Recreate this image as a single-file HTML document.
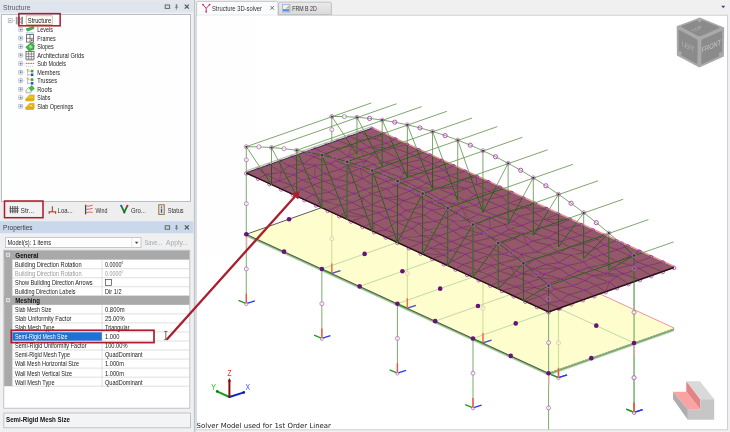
<!DOCTYPE html>
<html><head><meta charset="utf-8"><title>Structure 3D-solver</title>
<style>
html,body{margin:0;padding:0;background:#f0f0f0;overflow:hidden}
svg{display:block;font-family:"Liberation Sans",sans-serif;will-change:transform;opacity:0.999}
</style></head><body>
<svg width="730" height="432" viewBox="0 0 730 432">
<rect x="0.00" y="0.00" width="730.00" height="432.00" fill="#f0f0f0" />
<rect x="0.00" y="0.00" width="193.50" height="1.20" fill="#e4e6e9" />
<rect x="0.00" y="1.20" width="193.50" height="11.40" fill="#dfe5ee" />
<text x="3.10" y="9.82" font-size="7.7" fill="#5a5a5a" textLength="27.40" lengthAdjust="spacingAndGlyphs" >Structure</text>
<rect x="165.20" y="5.00" width="4.40" height="3.40" fill="none" stroke="#666" stroke-width="1.0" />
<line x1="176.50" y1="4.30" x2="176.50" y2="7.50" stroke="#777" stroke-width="1.5" />
<line x1="175.00" y1="7.60" x2="178.00" y2="7.60" stroke="#777" stroke-width="0.8" />
<line x1="176.50" y1="7.60" x2="176.50" y2="9.60" stroke="#777" stroke-width="0.7" />
<line x1="184.80" y1="4.60" x2="188.80" y2="8.60" stroke="#555" stroke-width="1.2" />
<line x1="188.80" y1="4.60" x2="184.80" y2="8.60" stroke="#555" stroke-width="1.2" />
<rect x="1.50" y="14.50" width="189.00" height="187.00" fill="#ffffff" stroke="#b9bec6" stroke-width="1" />
<line x1="10.00" y1="23.50" x2="10.00" y2="20.60" stroke="#bbb" stroke-width="0.6" />
<line x1="20.60" y1="24.00" x2="20.60" y2="106.00" stroke="#c8c8c8" stroke-width="0.6" stroke-dasharray="0.7 0.9"/>
<rect x="8.20" y="18.70" width="4.00" height="4.00" fill="#fff" stroke="#9aa7b8" stroke-width="0.6" />
<line x1="9.20" y1="20.70" x2="11.20" y2="20.70" stroke="#345" stroke-width="0.6" />
<line x1="12.40" y1="20.70" x2="15.00" y2="20.70" stroke="#c8c8c8" stroke-width="0.6" />
<rect x="15.80" y="16.80" width="1.80" height="7.60" fill="#9a9a9a" />
<rect x="21.20" y="16.80" width="1.80" height="7.60" fill="#8a8a8a" />
<rect x="17.70" y="18.60" width="3.30" height="0.80" fill="#666" />
<rect x="17.70" y="21.60" width="3.30" height="0.80" fill="#666" />
<rect x="18.60" y="16.50" width="1.40" height="8.00" fill="#999" />
<rect x="26.20" y="15.80" width="26.00" height="8.60" fill="#fffdf9" stroke="#c9a27a" stroke-width="0.7" />
<text x="27.80" y="23.24" font-size="7.6" fill="#111" textLength="23.40" lengthAdjust="spacingAndGlyphs" >Structure</text>
<rect x="18.80" y="27.70" width="3.80" height="3.80" fill="#fff" stroke="#9aa7b8" stroke-width="0.6" />
<line x1="19.60" y1="29.60" x2="21.80" y2="29.60" stroke="#2b4f9e" stroke-width="0.6" />
<line x1="20.70" y1="28.50" x2="20.70" y2="30.70" stroke="#2b4f9e" stroke-width="0.6" />
<line x1="22.80" y1="29.60" x2="24.50" y2="29.60" stroke="#c8c8c8" stroke-width="0.6" />
<text x="37.30" y="32.04" font-size="7.6" fill="#1a1a1a" textLength="15.70" lengthAdjust="spacingAndGlyphs" >Levels</text>
<polygon points="26.00,28.80 33.50,26.40 34.00,28.60 27.50,31.20" fill="#3fb34a" stroke="#2a8a33" stroke-width="0.5" />
<line x1="26.00" y1="32.90" x2="34.00" y2="32.90" stroke="#7fb0c8" stroke-width="0.7" />
<rect x="18.80" y="36.22" width="3.80" height="3.80" fill="#fff" stroke="#9aa7b8" stroke-width="0.6" />
<line x1="19.60" y1="38.12" x2="21.80" y2="38.12" stroke="#2b4f9e" stroke-width="0.6" />
<line x1="20.70" y1="37.02" x2="20.70" y2="39.22" stroke="#2b4f9e" stroke-width="0.6" />
<line x1="22.80" y1="38.12" x2="24.50" y2="38.12" stroke="#c8c8c8" stroke-width="0.6" />
<text x="37.30" y="40.56" font-size="7.6" fill="#1a1a1a" textLength="18.30" lengthAdjust="spacingAndGlyphs" >Frames</text>
<rect x="26.60" y="34.52" width="6.80" height="7.60" fill="#fff" stroke="#555" stroke-width="0.8" />
<line x1="30.00" y1="34.52" x2="30.00" y2="42.12" stroke="#555" stroke-width="0.7" />
<line x1="26.60" y1="38.32" x2="33.40" y2="38.32" stroke="#555" stroke-width="0.7" />
<rect x="31.00" y="39.32" width="1.60" height="1.60" fill="#555" />
<rect x="18.80" y="44.74" width="3.80" height="3.80" fill="#fff" stroke="#9aa7b8" stroke-width="0.6" />
<line x1="19.60" y1="46.64" x2="21.80" y2="46.64" stroke="#2b4f9e" stroke-width="0.6" />
<line x1="20.70" y1="45.54" x2="20.70" y2="47.74" stroke="#2b4f9e" stroke-width="0.6" />
<line x1="22.80" y1="46.64" x2="24.50" y2="46.64" stroke="#c8c8c8" stroke-width="0.6" />
<text x="37.30" y="49.08" font-size="7.6" fill="#1a1a1a" textLength="16.50" lengthAdjust="spacingAndGlyphs" >Slopes</text>
<polygon points="25.80,47.14 31.00,42.84 34.20,45.14 33.80,49.44 29.00,50.64" fill="#3fb34a" stroke="#2a7a33" stroke-width="0.6" />
<polygon points="28.50,46.14 31.00,44.64 32.80,47.44 30.20,48.84" fill="#9be08a" />
<line x1="31.50" y1="42.64" x2="34.50" y2="43.44" stroke="#666" stroke-width="0.8" />
<rect x="18.80" y="53.26" width="3.80" height="3.80" fill="#fff" stroke="#9aa7b8" stroke-width="0.6" />
<line x1="19.60" y1="55.16" x2="21.80" y2="55.16" stroke="#2b4f9e" stroke-width="0.6" />
<line x1="20.70" y1="54.06" x2="20.70" y2="56.26" stroke="#2b4f9e" stroke-width="0.6" />
<line x1="22.80" y1="55.16" x2="24.50" y2="55.16" stroke="#c8c8c8" stroke-width="0.6" />
<text x="37.30" y="57.60" font-size="7.6" fill="#1a1a1a" textLength="46.70" lengthAdjust="spacingAndGlyphs" >Architectural Grids</text>
<rect x="26.00" y="51.36" width="8.00" height="7.80" fill="#fff" stroke="#555" stroke-width="0.8" />
<line x1="28.67" y1="51.36" x2="28.67" y2="59.16" stroke="#555" stroke-width="0.6" />
<line x1="26.00" y1="53.96" x2="34.00" y2="53.96" stroke="#555" stroke-width="0.6" />
<line x1="31.34" y1="51.36" x2="31.34" y2="59.16" stroke="#555" stroke-width="0.6" />
<line x1="26.00" y1="56.56" x2="34.00" y2="56.56" stroke="#555" stroke-width="0.6" />
<rect x="18.80" y="61.78" width="3.80" height="3.80" fill="#fff" stroke="#9aa7b8" stroke-width="0.6" />
<line x1="19.60" y1="63.68" x2="21.80" y2="63.68" stroke="#2b4f9e" stroke-width="0.6" />
<line x1="20.70" y1="62.58" x2="20.70" y2="64.78" stroke="#2b4f9e" stroke-width="0.6" />
<line x1="22.80" y1="63.68" x2="24.50" y2="63.68" stroke="#c8c8c8" stroke-width="0.6" />
<text x="37.30" y="66.12" font-size="7.6" fill="#1a1a1a" textLength="28.70" lengthAdjust="spacingAndGlyphs" >Sub Models</text>
<line x1="25.80" y1="63.38" x2="34.20" y2="63.38" stroke="#d8452a" stroke-width="0.9" stroke-dasharray="1.6 0.7"/>
<line x1="25.80" y1="60.48" x2="34.20" y2="60.48" stroke="#999" stroke-width="0.5" />
<line x1="25.80" y1="66.28" x2="34.20" y2="66.28" stroke="#999" stroke-width="0.5" stroke-dasharray="1.2 0.8"/>
<rect x="18.80" y="70.30" width="3.80" height="3.80" fill="#fff" stroke="#9aa7b8" stroke-width="0.6" />
<line x1="19.60" y1="72.20" x2="21.80" y2="72.20" stroke="#2b4f9e" stroke-width="0.6" />
<line x1="20.70" y1="71.10" x2="20.70" y2="73.30" stroke="#2b4f9e" stroke-width="0.6" />
<line x1="22.80" y1="72.20" x2="24.50" y2="72.20" stroke="#c8c8c8" stroke-width="0.6" />
<text x="37.30" y="74.64" font-size="7.6" fill="#1a1a1a" textLength="22.70" lengthAdjust="spacingAndGlyphs" >Members</text>
<rect x="26.80" y="69.00" width="1.70" height="1.70" fill="#e8a23a" />
<line x1="27.60" y1="70.70" x2="27.60" y2="75.70" stroke="#999" stroke-width="0.6" />
<line x1="27.60" y1="71.20" x2="30.80" y2="71.20" stroke="#999" stroke-width="0.6" />
<line x1="27.60" y1="74.80" x2="30.80" y2="74.80" stroke="#999" stroke-width="0.6" />
<rect x="30.80" y="69.80" width="2.60" height="2.60" fill="#3aa43a" />
<rect x="30.80" y="73.50" width="2.60" height="2.60" fill="#2456c8" />
<rect x="18.80" y="78.82" width="3.80" height="3.80" fill="#fff" stroke="#9aa7b8" stroke-width="0.6" />
<line x1="19.60" y1="80.72" x2="21.80" y2="80.72" stroke="#2b4f9e" stroke-width="0.6" />
<line x1="20.70" y1="79.62" x2="20.70" y2="81.82" stroke="#2b4f9e" stroke-width="0.6" />
<line x1="22.80" y1="80.72" x2="24.50" y2="80.72" stroke="#c8c8c8" stroke-width="0.6" />
<text x="37.30" y="83.16" font-size="7.6" fill="#1a1a1a" textLength="19.70" lengthAdjust="spacingAndGlyphs" >Trusses</text>
<rect x="26.80" y="77.52" width="1.70" height="1.70" fill="#e8a23a" />
<line x1="27.60" y1="79.22" x2="27.60" y2="84.22" stroke="#999" stroke-width="0.6" />
<line x1="27.60" y1="79.72" x2="30.80" y2="79.72" stroke="#999" stroke-width="0.6" />
<line x1="27.60" y1="83.32" x2="30.80" y2="83.32" stroke="#999" stroke-width="0.6" />
<rect x="30.80" y="78.32" width="2.60" height="2.60" fill="#3aa43a" />
<rect x="30.80" y="82.02" width="2.60" height="2.60" fill="#2456c8" />
<rect x="18.80" y="87.34" width="3.80" height="3.80" fill="#fff" stroke="#9aa7b8" stroke-width="0.6" />
<line x1="19.60" y1="89.24" x2="21.80" y2="89.24" stroke="#2b4f9e" stroke-width="0.6" />
<line x1="20.70" y1="88.14" x2="20.70" y2="90.34" stroke="#2b4f9e" stroke-width="0.6" />
<line x1="22.80" y1="89.24" x2="24.50" y2="89.24" stroke="#c8c8c8" stroke-width="0.6" />
<text x="37.30" y="91.68" font-size="7.6" fill="#1a1a1a" textLength="14.70" lengthAdjust="spacingAndGlyphs" >Roofs</text>
<polygon points="26.00,90.04 29.00,87.24 31.00,89.74 31.00,92.84 26.00,92.84" fill="#f4f4f4" stroke="#888" stroke-width="0.6" />
<polygon points="29.20,88.04 31.80,85.44 34.40,88.44 31.60,91.04" fill="#45c03a" stroke="#2a8a2a" stroke-width="0.5" />
<rect x="18.80" y="95.86" width="3.80" height="3.80" fill="#fff" stroke="#9aa7b8" stroke-width="0.6" />
<line x1="19.60" y1="97.76" x2="21.80" y2="97.76" stroke="#2b4f9e" stroke-width="0.6" />
<line x1="20.70" y1="96.66" x2="20.70" y2="98.86" stroke="#2b4f9e" stroke-width="0.6" />
<line x1="22.80" y1="97.76" x2="24.50" y2="97.76" stroke="#c8c8c8" stroke-width="0.6" />
<text x="37.30" y="100.20" font-size="7.6" fill="#1a1a1a" textLength="13.00" lengthAdjust="spacingAndGlyphs" >Slabs</text>
<polygon points="25.80,98.96 29.50,94.96 34.20,94.96 34.20,99.26 33.40,100.96 25.80,100.96" fill="#f2c21a" stroke="#b88a10" stroke-width="0.5" />
<line x1="25.80" y1="99.16" x2="33.60" y2="99.16" stroke="#a87a10" stroke-width="0.5" />
<rect x="18.80" y="104.38" width="3.80" height="3.80" fill="#fff" stroke="#9aa7b8" stroke-width="0.6" />
<line x1="19.60" y1="106.28" x2="21.80" y2="106.28" stroke="#2b4f9e" stroke-width="0.6" />
<line x1="20.70" y1="105.18" x2="20.70" y2="107.38" stroke="#2b4f9e" stroke-width="0.6" />
<line x1="22.80" y1="106.28" x2="24.50" y2="106.28" stroke="#c8c8c8" stroke-width="0.6" />
<text x="37.30" y="108.72" font-size="7.6" fill="#1a1a1a" textLength="36.00" lengthAdjust="spacingAndGlyphs" >Slab Openings</text>
<polygon points="25.80,107.48 29.50,103.48 34.20,103.48 34.20,107.78 33.40,109.48 25.80,109.48" fill="#f2c21a" stroke="#b88a10" stroke-width="0.5" />
<polygon points="29.00,106.68 30.40,104.88 32.80,104.88 31.80,106.68" fill="#fff7d0" stroke="#a87a10" stroke-width="0.4" />
<line x1="25.80" y1="107.88" x2="33.60" y2="107.88" stroke="#a87a10" stroke-width="0.5" />
<rect x="0.00" y="202.20" width="193.50" height="19.40" fill="#eeeeee" />
<rect x="4.60" y="202.00" width="38.40" height="15.40" fill="#f3f3f3" stroke="#d0d0d0" stroke-width="0.6" />
<rect x="9.80" y="206.00" width="1.30" height="7.20" fill="#6a6a6a" />
<rect x="12.10" y="206.00" width="1.30" height="7.20" fill="#6a6a6a" />
<rect x="14.40" y="206.00" width="1.30" height="7.20" fill="#6a6a6a" />
<rect x="16.70" y="206.00" width="1.30" height="7.20" fill="#6a6a6a" />
<rect x="9.60" y="208.00" width="9.20" height="0.80" fill="#555" />
<rect x="9.60" y="210.60" width="9.20" height="0.80" fill="#555" />
<text x="20.60" y="212.56" font-size="7.4" fill="#333" textLength="13.60" lengthAdjust="spacingAndGlyphs" >Str...</text>
<line x1="52.40" y1="206.20" x2="52.40" y2="211.40" stroke="#b5503c" stroke-width="1.2" />
<line x1="48.60" y1="211.80" x2="56.20" y2="211.80" stroke="#b5503c" stroke-width="1.3" />
<line x1="49.20" y1="211.80" x2="49.20" y2="214.00" stroke="#b5503c" stroke-width="1.1" />
<line x1="55.60" y1="211.80" x2="55.60" y2="214.00" stroke="#b5503c" stroke-width="1.1" />
<text x="57.60" y="212.56" font-size="7.4" fill="#333" textLength="15.00" lengthAdjust="spacingAndGlyphs" >Loa...</text>
<line x1="85.60" y1="204.80" x2="85.60" y2="214.40" stroke="#4a4a4a" stroke-width="1.3" />
<path d="M86.4,206 Q89,206.6 92.6,205.2 M86.4,209.4 Q89.5,209.2 92.6,208.4 M86.4,212.6 Q89.5,211.6 92.6,212.4" fill="none" stroke="#cc5a4a" stroke-width="0.9"/>
<text x="95.40" y="212.56" font-size="7.4" fill="#333" textLength="12.00" lengthAdjust="spacingAndGlyphs" >Wind</text>
<line x1="121.40" y1="206.20" x2="124.30" y2="212.20" stroke="#1f7a30" stroke-width="1.8" />
<line x1="127.20" y1="206.20" x2="124.30" y2="212.20" stroke="#1f7a30" stroke-width="1.8" />
<circle cx="121.20" cy="205.80" r="1.1" fill="#2456c8" />
<circle cx="127.40" cy="205.80" r="1.1" fill="#d0282a" />
<circle cx="124.30" cy="212.60" r="1.0" fill="#145a22" />
<text x="131.00" y="212.56" font-size="7.4" fill="#333" textLength="14.80" lengthAdjust="spacingAndGlyphs" >Gro...</text>
<rect x="158.80" y="204.80" width="5.40" height="9.60" fill="#f4ecd8" stroke="#8f6f3c" stroke-width="1.0" />
<rect x="160.80" y="206.40" width="1.40" height="1.40" fill="#2b5fb8" />
<rect x="160.80" y="208.60" width="1.40" height="4.20" fill="#2b5fb8" />
<text x="167.80" y="212.56" font-size="7.4" fill="#333" textLength="15.80" lengthAdjust="spacingAndGlyphs" >Status</text>
<rect x="0.00" y="221.30" width="193.50" height="11.90" fill="#c9d8ea" />
<text x="3.10" y="230.17" font-size="7.7" fill="#3c3c3c" textLength="29.40" lengthAdjust="spacingAndGlyphs" >Properties</text>
<rect x="165.20" y="225.80" width="4.40" height="3.40" fill="none" stroke="#666" stroke-width="1.0" />
<line x1="176.50" y1="225.00" x2="176.50" y2="228.20" stroke="#777" stroke-width="1.5" />
<line x1="175.00" y1="228.30" x2="178.00" y2="228.30" stroke="#777" stroke-width="0.8" />
<line x1="176.50" y1="228.30" x2="176.50" y2="230.30" stroke="#777" stroke-width="0.7" />
<line x1="184.80" y1="225.40" x2="188.80" y2="229.40" stroke="#555" stroke-width="1.2" />
<line x1="188.80" y1="225.40" x2="184.80" y2="229.40" stroke="#555" stroke-width="1.2" />
<rect x="0.00" y="233.80" width="193.50" height="198.20" fill="#f0f0f0" />
<rect x="5.50" y="237.60" width="135.50" height="10.00" fill="#ffffff" stroke="#b8bcc4" stroke-width="0.8" />
<text x="7.60" y="245.43" font-size="7.3" fill="#222" textLength="43.40" lengthAdjust="spacingAndGlyphs" >Model(s): 1 items</text>
<line x1="131.80" y1="237.60" x2="131.80" y2="247.60" stroke="#d0d3d8" stroke-width="0.6" />
<polygon points="134.80,241.80 138.40,241.80 136.60,244.00" fill="#444" />
<text x="144.60" y="245.34" font-size="7.6" fill="#a3a8b0" textLength="17.40" lengthAdjust="spacingAndGlyphs" >Save...</text>
<text x="166.00" y="245.34" font-size="7.6" fill="#a3a8b0" textLength="22.00" lengthAdjust="spacingAndGlyphs" >Apply...</text>
<rect x="3.80" y="250.20" width="186.00" height="158.00" fill="#ffffff" stroke="#b5b8bd" stroke-width="0.8" />
<rect x="4.20" y="250.60" width="8.20" height="135.60" fill="#a9a9a9" />
<rect x="4.20" y="250.60" width="185.20" height="9.04" fill="#a9a9a9" />
<rect x="6.20" y="253.12" width="3.60" height="3.60" fill="#dcdce4" stroke="#ececf2" stroke-width="0.5" />
<line x1="7.00" y1="254.92" x2="9.00" y2="254.92" stroke="#4a5a8a" stroke-width="0.6" />
<text x="15.30" y="258.13" font-size="7.8" fill="#111" textLength="23.20" lengthAdjust="spacingAndGlyphs" font-weight="bold" >General</text>
<line x1="12.40" y1="268.68" x2="189.40" y2="268.68" stroke="#d2d2d2" stroke-width="0.7" />
<line x1="102.00" y1="259.64" x2="102.00" y2="268.68" stroke="#d2d2d2" stroke-width="0.7" />
<text x="15.00" y="267.02" font-size="7.4" fill="#222" textLength="66.60" lengthAdjust="spacingAndGlyphs" >Building Direction Rotation</text>
<text x="105.00" y="267.02" font-size="7.4" fill="#222" textLength="18.50" lengthAdjust="spacingAndGlyphs" >0.0000°</text>
<line x1="12.40" y1="277.72" x2="189.40" y2="277.72" stroke="#d2d2d2" stroke-width="0.7" />
<line x1="102.00" y1="268.68" x2="102.00" y2="277.72" stroke="#d2d2d2" stroke-width="0.7" />
<text x="15.00" y="276.06" font-size="7.4" fill="#9a9a9a" textLength="66.60" lengthAdjust="spacingAndGlyphs" >Building Direction Rotation</text>
<text x="105.00" y="276.06" font-size="7.4" fill="#9a9a9a" textLength="18.50" lengthAdjust="spacingAndGlyphs" >0.0000°</text>
<line x1="12.40" y1="286.76" x2="189.40" y2="286.76" stroke="#d2d2d2" stroke-width="0.7" />
<line x1="102.00" y1="277.72" x2="102.00" y2="286.76" stroke="#d2d2d2" stroke-width="0.7" />
<text x="15.00" y="285.10" font-size="7.4" fill="#222" textLength="77.50" lengthAdjust="spacingAndGlyphs" >Show Building Direction Arrows</text>
<rect x="105.60" y="279.54" width="5.80" height="5.80" fill="#fff" stroke="#444" stroke-width="0.7" />
<line x1="12.40" y1="295.80" x2="189.40" y2="295.80" stroke="#d2d2d2" stroke-width="0.7" />
<line x1="102.00" y1="286.76" x2="102.00" y2="295.80" stroke="#d2d2d2" stroke-width="0.7" />
<text x="15.00" y="294.14" font-size="7.4" fill="#222" textLength="60.50" lengthAdjust="spacingAndGlyphs" >Building Direction Labels</text>
<text x="105.00" y="294.14" font-size="7.4" fill="#222" textLength="16.50" lengthAdjust="spacingAndGlyphs" >Dir 1/2</text>
<rect x="4.20" y="295.80" width="185.20" height="9.04" fill="#a9a9a9" />
<rect x="6.20" y="298.32" width="3.60" height="3.60" fill="#dcdce4" stroke="#ececf2" stroke-width="0.5" />
<line x1="7.00" y1="300.12" x2="9.00" y2="300.12" stroke="#4a5a8a" stroke-width="0.6" />
<text x="15.30" y="303.33" font-size="7.8" fill="#111" textLength="24.70" lengthAdjust="spacingAndGlyphs" font-weight="bold" >Meshing</text>
<line x1="12.40" y1="313.88" x2="189.40" y2="313.88" stroke="#d2d2d2" stroke-width="0.7" />
<line x1="102.00" y1="304.84" x2="102.00" y2="313.88" stroke="#d2d2d2" stroke-width="0.7" />
<text x="15.00" y="312.22" font-size="7.4" fill="#222" textLength="36.50" lengthAdjust="spacingAndGlyphs" >Slab Mesh Size</text>
<text x="105.00" y="312.22" font-size="7.4" fill="#222" textLength="19.50" lengthAdjust="spacingAndGlyphs" >0.800m</text>
<line x1="12.40" y1="322.92" x2="189.40" y2="322.92" stroke="#d2d2d2" stroke-width="0.7" />
<line x1="102.00" y1="313.88" x2="102.00" y2="322.92" stroke="#d2d2d2" stroke-width="0.7" />
<text x="15.00" y="321.26" font-size="7.4" fill="#222" textLength="56.50" lengthAdjust="spacingAndGlyphs" >Slab Uniformity Factor</text>
<text x="105.00" y="321.26" font-size="7.4" fill="#222" textLength="19.50" lengthAdjust="spacingAndGlyphs" >25.00%</text>
<line x1="12.40" y1="331.96" x2="189.40" y2="331.96" stroke="#d2d2d2" stroke-width="0.7" />
<line x1="102.00" y1="322.92" x2="102.00" y2="331.96" stroke="#d2d2d2" stroke-width="0.7" />
<text x="15.00" y="330.30" font-size="7.4" fill="#222" textLength="39.50" lengthAdjust="spacingAndGlyphs" >Slab Mesh Type</text>
<text x="105.00" y="330.30" font-size="7.4" fill="#222" textLength="24.50" lengthAdjust="spacingAndGlyphs" >Triangular</text>
<line x1="12.40" y1="341.00" x2="189.40" y2="341.00" stroke="#d2d2d2" stroke-width="0.7" />
<line x1="102.00" y1="331.96" x2="102.00" y2="341.00" stroke="#d2d2d2" stroke-width="0.7" />
<rect x="12.40" y="332.26" width="89.40" height="8.44" fill="#1e72d6" />
<text x="15.00" y="339.34" font-size="7.4" fill="#ffffff" textLength="52.50" lengthAdjust="spacingAndGlyphs" >Semi-Rigid Mesh Size</text>
<text x="105.00" y="339.34" font-size="7.4" fill="#222" textLength="14.50" lengthAdjust="spacingAndGlyphs" >1.000</text>
<line x1="12.40" y1="350.04" x2="189.40" y2="350.04" stroke="#d2d2d2" stroke-width="0.7" />
<line x1="102.00" y1="341.00" x2="102.00" y2="350.04" stroke="#d2d2d2" stroke-width="0.7" />
<text x="15.00" y="348.38" font-size="7.4" fill="#222" textLength="71.50" lengthAdjust="spacingAndGlyphs" >Semi-Rigid Uniformity Factor</text>
<text x="105.00" y="348.38" font-size="7.4" fill="#222" textLength="22.50" lengthAdjust="spacingAndGlyphs" >100.00%</text>
<line x1="12.40" y1="359.08" x2="189.40" y2="359.08" stroke="#d2d2d2" stroke-width="0.7" />
<line x1="102.00" y1="350.04" x2="102.00" y2="359.08" stroke="#d2d2d2" stroke-width="0.7" />
<text x="15.00" y="357.42" font-size="7.4" fill="#222" textLength="55.00" lengthAdjust="spacingAndGlyphs" >Semi-Rigid Mesh Type</text>
<text x="105.00" y="357.42" font-size="7.4" fill="#222" textLength="37.50" lengthAdjust="spacingAndGlyphs" >QuadDominant</text>
<line x1="12.40" y1="368.12" x2="189.40" y2="368.12" stroke="#d2d2d2" stroke-width="0.7" />
<line x1="102.00" y1="359.08" x2="102.00" y2="368.12" stroke="#d2d2d2" stroke-width="0.7" />
<text x="15.00" y="366.46" font-size="7.4" fill="#222" textLength="64.00" lengthAdjust="spacingAndGlyphs" >Wall Mesh Horizontal Size</text>
<text x="105.00" y="366.46" font-size="7.4" fill="#222" textLength="19.00" lengthAdjust="spacingAndGlyphs" >1.000m</text>
<line x1="12.40" y1="377.16" x2="189.40" y2="377.16" stroke="#d2d2d2" stroke-width="0.7" />
<line x1="102.00" y1="368.12" x2="102.00" y2="377.16" stroke="#d2d2d2" stroke-width="0.7" />
<text x="15.00" y="375.50" font-size="7.4" fill="#222" textLength="57.00" lengthAdjust="spacingAndGlyphs" >Wall Mesh Vertical Size</text>
<text x="105.00" y="375.50" font-size="7.4" fill="#222" textLength="19.00" lengthAdjust="spacingAndGlyphs" >1.000m</text>
<line x1="12.40" y1="386.20" x2="189.40" y2="386.20" stroke="#d2d2d2" stroke-width="0.7" />
<line x1="102.00" y1="377.16" x2="102.00" y2="386.20" stroke="#d2d2d2" stroke-width="0.7" />
<text x="15.00" y="384.54" font-size="7.4" fill="#222" textLength="39.50" lengthAdjust="spacingAndGlyphs" >Wall Mesh Type</text>
<text x="105.00" y="384.54" font-size="7.4" fill="#222" textLength="37.50" lengthAdjust="spacingAndGlyphs" >QuadDominant</text>
<rect x="3.80" y="413.00" width="186.60" height="14.80" fill="#f3f4f6" stroke="#b5b8bd" stroke-width="0.8" />
<text x="6.00" y="422.11" font-size="7.8" fill="#111" textLength="64.00" lengthAdjust="spacingAndGlyphs" font-weight="bold" >Semi-Rigid Mesh Size</text>
<rect x="193.50" y="0.00" width="2.20" height="432.00" fill="#dfe2e7" />
<line x1="194.60" y1="0.00" x2="194.60" y2="432.00" stroke="#bcc0c8" stroke-width="1.0" />
<rect x="195.70" y="0.00" width="534.30" height="15.00" fill="#f0f0f0" />
<rect x="196.20" y="15.20" width="531.30" height="414.60" fill="#ffffff" stroke="#c3c7ce" stroke-width="0.8" />
<defs><clipPath id="vclip"><rect x="196.6" y="15.6" width="530.5" height="413.8"/></clipPath></defs>
<g clip-path="url(#vclip)">
<line x1="331.80" y1="204.05" x2="331.80" y2="273.35" stroke="#86b27a" stroke-width="1.1" />
<line x1="332.10" y1="205.55" x2="332.10" y2="216.05" stroke="#f6a4a4" stroke-width="1.3" stroke-opacity="0.85"/>
<line x1="331.80" y1="142.75" x2="331.80" y2="204.05" stroke="#86b27a" stroke-width="1.1" />
<circle cx="331.80" cy="173.40" r="2.0" fill="#ffffff" stroke="#b565b5" stroke-width="0.75" fill-opacity="0.7"/>
<line x1="331.80" y1="273.35" x2="324.00" y2="270.15" stroke="#1f9a1f" stroke-width="1.3" />
<line x1="331.80" y1="273.35" x2="340.40" y2="270.55" stroke="#2838e8" stroke-width="1.3" />
<line x1="331.80" y1="273.85" x2="331.80" y2="263.55" stroke="#ff4a2a" stroke-width="1.3" />
<circle cx="331.80" cy="238.70" r="2.0" fill="#ffffff" stroke="#b565b5" stroke-width="0.75" fill-opacity="0.7"/>
<circle cx="331.80" cy="273.95" r="1.5" fill="#ffffff" stroke="#b565b5" stroke-width="0.75" fill-opacity="0.7"/>
<line x1="407.36" y1="238.79" x2="407.36" y2="308.09" stroke="#86b27a" stroke-width="1.1" />
<line x1="407.36" y1="308.09" x2="399.56" y2="304.89" stroke="#1f9a1f" stroke-width="1.3" />
<line x1="407.36" y1="308.09" x2="415.96" y2="305.29" stroke="#2838e8" stroke-width="1.3" />
<line x1="407.36" y1="308.59" x2="407.36" y2="298.29" stroke="#ff4a2a" stroke-width="1.3" />
<circle cx="407.36" cy="273.44" r="2.0" fill="#ffffff" stroke="#b565b5" stroke-width="0.75" fill-opacity="0.7"/>
<circle cx="407.36" cy="308.69" r="1.5" fill="#ffffff" stroke="#b565b5" stroke-width="0.75" fill-opacity="0.7"/>
<line x1="482.93" y1="273.53" x2="482.93" y2="342.83" stroke="#86b27a" stroke-width="1.1" />
<line x1="482.93" y1="342.83" x2="475.13" y2="339.63" stroke="#1f9a1f" stroke-width="1.3" />
<line x1="482.93" y1="342.83" x2="491.53" y2="340.03" stroke="#2838e8" stroke-width="1.3" />
<line x1="482.93" y1="343.33" x2="482.93" y2="333.03" stroke="#ff4a2a" stroke-width="1.3" />
<circle cx="482.93" cy="308.18" r="2.0" fill="#ffffff" stroke="#b565b5" stroke-width="0.75" fill-opacity="0.7"/>
<circle cx="482.93" cy="343.43" r="1.5" fill="#ffffff" stroke="#b565b5" stroke-width="0.75" fill-opacity="0.7"/>
<line x1="558.49" y1="308.27" x2="558.49" y2="377.57" stroke="#86b27a" stroke-width="1.1" />
<line x1="558.49" y1="377.57" x2="550.69" y2="374.37" stroke="#1f9a1f" stroke-width="1.3" />
<line x1="558.49" y1="377.57" x2="567.09" y2="374.77" stroke="#2838e8" stroke-width="1.3" />
<line x1="558.49" y1="378.07" x2="558.49" y2="367.77" stroke="#ff4a2a" stroke-width="1.3" />
<circle cx="558.49" cy="342.92" r="2.0" fill="#ffffff" stroke="#b565b5" stroke-width="0.75" fill-opacity="0.7"/>
<circle cx="558.49" cy="378.17" r="1.5" fill="#ffffff" stroke="#b565b5" stroke-width="0.75" fill-opacity="0.7"/>
<line x1="634.06" y1="343.01" x2="634.06" y2="412.31" stroke="#86b27a" stroke-width="1.1" />
<line x1="634.36" y1="344.51" x2="634.36" y2="355.01" stroke="#f6a4a4" stroke-width="1.3" stroke-opacity="0.85"/>
<line x1="634.06" y1="281.71" x2="634.06" y2="343.01" stroke="#86b27a" stroke-width="1.1" />
<circle cx="634.06" cy="312.36" r="2.0" fill="#ffffff" stroke="#b565b5" stroke-width="0.75" fill-opacity="0.7"/>
<line x1="634.06" y1="412.31" x2="626.26" y2="409.11" stroke="#1f9a1f" stroke-width="1.3" />
<line x1="634.06" y1="412.31" x2="642.66" y2="409.51" stroke="#2838e8" stroke-width="1.3" />
<line x1="634.06" y1="412.81" x2="634.06" y2="402.51" stroke="#ff4a2a" stroke-width="1.3" />
<circle cx="634.06" cy="377.66" r="2.0" fill="#ffffff" stroke="#b565b5" stroke-width="0.75" fill-opacity="0.7"/>
<circle cx="634.06" cy="412.91" r="1.5" fill="#ffffff" stroke="#b565b5" stroke-width="0.75" fill-opacity="0.7"/>
<polygon points="246.30,234.30 371.81,189.89 674.07,328.85 548.56,373.26" fill="#fcfcae" stroke="none" stroke-width="1" fill-opacity="0.62"/>
<polyline points="371.81,189.09 674.07,328.05" fill="none" stroke="#f29090" stroke-width="1.0" />
<polygon points="246.30,234.30 548.56,373.26 674.07,328.85 674.07,331.35 548.56,375.76 246.30,236.80" fill="#b4d6aa" />
<polygon points="246.30,234.30 548.56,373.26 674.07,328.85 674.07,330.25 548.56,374.66 246.30,235.70" fill="#7aaa72" />
<polyline points="371.81,189.89 246.30,234.30 548.56,373.26 674.07,328.85" fill="none" stroke="#4a4a44" stroke-width="0.9" />
<polyline points="321.86,269.04 407.36,238.79" fill="none" stroke="#b3d19e" stroke-width="0.8" />
<polyline points="359.65,286.41 445.15,256.16" fill="none" stroke="#b3d19e" stroke-width="0.8" />
<polyline points="397.43,303.78 482.93,273.53" fill="none" stroke="#b3d19e" stroke-width="0.8" />
<polyline points="435.21,321.15 520.71,290.90" fill="none" stroke="#b3d19e" stroke-width="0.8" />
<polyline points="472.99,338.52 558.49,308.27" fill="none" stroke="#b3d19e" stroke-width="0.8" />
<polyline points="548.56,373.26 674.07,328.85" fill="none" stroke="#b3d19e" stroke-width="0.8" />
<polyline points="331.80,204.05 634.06,343.01" fill="none" stroke="#b3d19e" stroke-width="0.8" />
<g opacity="0.75">
<line x1="331.80" y1="273.35" x2="324.00" y2="270.15" stroke="#1f9a1f" stroke-width="1.3" />
<line x1="331.80" y1="273.35" x2="340.40" y2="270.55" stroke="#2838e8" stroke-width="1.3" />
<line x1="331.80" y1="273.85" x2="331.80" y2="263.55" stroke="#ff4a2a" stroke-width="1.3" />
</g>
<g opacity="0.75">
<line x1="407.36" y1="308.09" x2="399.56" y2="304.89" stroke="#1f9a1f" stroke-width="1.3" />
<line x1="407.36" y1="308.09" x2="415.96" y2="305.29" stroke="#2838e8" stroke-width="1.3" />
<line x1="407.36" y1="308.59" x2="407.36" y2="298.29" stroke="#ff4a2a" stroke-width="1.3" />
</g>
<g opacity="0.75">
<line x1="482.93" y1="342.83" x2="475.13" y2="339.63" stroke="#1f9a1f" stroke-width="1.3" />
<line x1="482.93" y1="342.83" x2="491.53" y2="340.03" stroke="#2838e8" stroke-width="1.3" />
<line x1="482.93" y1="343.33" x2="482.93" y2="333.03" stroke="#ff4a2a" stroke-width="1.3" />
</g>
<g opacity="0.75">
<line x1="558.49" y1="377.57" x2="550.69" y2="374.37" stroke="#1f9a1f" stroke-width="1.3" />
<line x1="558.49" y1="377.57" x2="567.09" y2="374.77" stroke="#2838e8" stroke-width="1.3" />
<line x1="558.49" y1="378.07" x2="558.49" y2="367.77" stroke="#ff4a2a" stroke-width="1.3" />
</g>
<line x1="246.30" y1="234.30" x2="246.30" y2="303.60" stroke="#86b27a" stroke-width="1.1" />
<line x1="246.60" y1="235.80" x2="246.60" y2="246.30" stroke="#f6a4a4" stroke-width="1.3" stroke-opacity="0.85"/>
<line x1="246.30" y1="173.00" x2="246.30" y2="234.30" stroke="#86b27a" stroke-width="1.1" />
<circle cx="246.30" cy="203.65" r="2.0" fill="#ffffff" stroke="#b565b5" stroke-width="0.75" fill-opacity="0.7"/>
<line x1="246.30" y1="303.60" x2="238.50" y2="300.40" stroke="#1f9a1f" stroke-width="1.3" />
<line x1="246.30" y1="303.60" x2="254.90" y2="300.80" stroke="#2838e8" stroke-width="1.3" />
<line x1="246.30" y1="304.10" x2="246.30" y2="293.80" stroke="#ff4a2a" stroke-width="1.3" />
<circle cx="246.30" cy="268.95" r="2.0" fill="#ffffff" stroke="#b565b5" stroke-width="0.75" fill-opacity="0.7"/>
<circle cx="246.30" cy="304.20" r="1.5" fill="#ffffff" stroke="#b565b5" stroke-width="0.75" fill-opacity="0.7"/>
<line x1="321.86" y1="269.04" x2="321.86" y2="338.34" stroke="#86b27a" stroke-width="1.1" />
<line x1="321.86" y1="338.34" x2="314.06" y2="335.14" stroke="#1f9a1f" stroke-width="1.3" />
<line x1="321.86" y1="338.34" x2="330.46" y2="335.54" stroke="#2838e8" stroke-width="1.3" />
<line x1="321.86" y1="338.84" x2="321.86" y2="328.54" stroke="#ff4a2a" stroke-width="1.3" />
<circle cx="321.86" cy="303.69" r="2.0" fill="#ffffff" stroke="#b565b5" stroke-width="0.75" fill-opacity="0.7"/>
<circle cx="321.86" cy="338.94" r="1.5" fill="#ffffff" stroke="#b565b5" stroke-width="0.75" fill-opacity="0.7"/>
<line x1="397.43" y1="303.78" x2="397.43" y2="373.08" stroke="#86b27a" stroke-width="1.1" />
<line x1="397.43" y1="373.08" x2="389.63" y2="369.88" stroke="#1f9a1f" stroke-width="1.3" />
<line x1="397.43" y1="373.08" x2="406.03" y2="370.28" stroke="#2838e8" stroke-width="1.3" />
<line x1="397.43" y1="373.58" x2="397.43" y2="363.28" stroke="#ff4a2a" stroke-width="1.3" />
<circle cx="397.43" cy="338.43" r="2.0" fill="#ffffff" stroke="#b565b5" stroke-width="0.75" fill-opacity="0.7"/>
<circle cx="397.43" cy="373.68" r="1.5" fill="#ffffff" stroke="#b565b5" stroke-width="0.75" fill-opacity="0.7"/>
<line x1="472.99" y1="338.52" x2="472.99" y2="407.82" stroke="#86b27a" stroke-width="1.1" />
<line x1="472.99" y1="407.82" x2="465.19" y2="404.62" stroke="#1f9a1f" stroke-width="1.3" />
<line x1="472.99" y1="407.82" x2="481.59" y2="405.02" stroke="#2838e8" stroke-width="1.3" />
<line x1="472.99" y1="408.32" x2="472.99" y2="398.02" stroke="#ff4a2a" stroke-width="1.3" />
<circle cx="472.99" cy="373.17" r="2.0" fill="#ffffff" stroke="#b565b5" stroke-width="0.75" fill-opacity="0.7"/>
<circle cx="472.99" cy="408.42" r="1.5" fill="#ffffff" stroke="#b565b5" stroke-width="0.75" fill-opacity="0.7"/>
<line x1="548.56" y1="373.26" x2="548.56" y2="442.56" stroke="#86b27a" stroke-width="1.1" />
<line x1="548.86" y1="374.76" x2="548.86" y2="385.26" stroke="#f6a4a4" stroke-width="1.3" stroke-opacity="0.85"/>
<line x1="548.56" y1="311.96" x2="548.56" y2="373.26" stroke="#86b27a" stroke-width="1.1" />
<circle cx="548.56" cy="342.61" r="2.0" fill="#ffffff" stroke="#b565b5" stroke-width="0.75" fill-opacity="0.7"/>
<line x1="548.56" y1="442.56" x2="540.76" y2="439.36" stroke="#1f9a1f" stroke-width="1.3" />
<line x1="548.56" y1="442.56" x2="557.16" y2="439.76" stroke="#2838e8" stroke-width="1.3" />
<line x1="548.56" y1="443.06" x2="548.56" y2="432.76" stroke="#ff4a2a" stroke-width="1.3" />
<circle cx="548.56" cy="407.91" r="2.0" fill="#ffffff" stroke="#b565b5" stroke-width="0.75" fill-opacity="0.7"/>
<circle cx="548.56" cy="443.16" r="1.5" fill="#ffffff" stroke="#b565b5" stroke-width="0.75" fill-opacity="0.7"/>
<line x1="634.06" y1="343.01" x2="634.06" y2="412.31" stroke="#86b27a" stroke-width="1.1" />
<line x1="634.36" y1="344.51" x2="634.36" y2="355.01" stroke="#f6a4a4" stroke-width="1.3" stroke-opacity="0.85"/>
<line x1="634.06" y1="281.71" x2="634.06" y2="343.01" stroke="#86b27a" stroke-width="1.1" />
<circle cx="634.06" cy="312.36" r="2.0" fill="#ffffff" stroke="#b565b5" stroke-width="0.75" fill-opacity="0.7"/>
<line x1="634.06" y1="412.31" x2="626.26" y2="409.11" stroke="#1f9a1f" stroke-width="1.3" />
<line x1="634.06" y1="412.31" x2="642.66" y2="409.51" stroke="#2838e8" stroke-width="1.3" />
<line x1="634.06" y1="412.81" x2="634.06" y2="402.51" stroke="#ff4a2a" stroke-width="1.3" />
<circle cx="634.06" cy="377.66" r="2.0" fill="#ffffff" stroke="#b565b5" stroke-width="0.75" fill-opacity="0.7"/>
<circle cx="634.06" cy="412.91" r="1.5" fill="#ffffff" stroke="#b565b5" stroke-width="0.75" fill-opacity="0.7"/>
<circle cx="246.30" cy="234.30" r="2.3" fill="#66127a" />
<circle cx="284.08" cy="251.67" r="2.3" fill="#66127a" />
<circle cx="321.86" cy="269.04" r="2.3" fill="#66127a" />
<circle cx="359.65" cy="286.41" r="2.3" fill="#66127a" />
<circle cx="397.43" cy="303.78" r="2.3" fill="#66127a" />
<circle cx="435.21" cy="321.15" r="2.3" fill="#66127a" />
<circle cx="472.99" cy="338.52" r="2.3" fill="#66127a" />
<circle cx="510.77" cy="355.89" r="2.3" fill="#66127a" />
<circle cx="548.56" cy="373.26" r="2.3" fill="#66127a" />
<circle cx="331.80" cy="204.05" r="2.3" fill="#66127a" />
<circle cx="369.58" cy="221.42" r="2.3" fill="#66127a" />
<circle cx="407.36" cy="238.79" r="2.3" fill="#66127a" />
<circle cx="445.15" cy="256.16" r="2.3" fill="#66127a" />
<circle cx="482.93" cy="273.53" r="2.3" fill="#66127a" />
<circle cx="520.71" cy="290.90" r="2.3" fill="#66127a" />
<circle cx="558.49" cy="308.27" r="2.3" fill="#66127a" />
<circle cx="596.27" cy="325.64" r="2.3" fill="#66127a" />
<circle cx="634.06" cy="343.01" r="2.3" fill="#66127a" />
<circle cx="289.05" cy="219.18" r="2.3" fill="#66127a" />
<circle cx="364.61" cy="253.92" r="2.3" fill="#66127a" />
<circle cx="440.18" cy="288.66" r="2.3" fill="#66127a" />
<circle cx="515.74" cy="323.40" r="2.3" fill="#66127a" />
<circle cx="591.31" cy="358.14" r="2.3" fill="#66127a" />
<circle cx="402.40" cy="271.29" r="2.3" fill="#66127a" />
<circle cx="477.96" cy="306.03" r="2.3" fill="#66127a" />
<defs><clipPath id="slabclip"><polygon points="246.30,173.00 371.81,128.59 674.07,267.55 548.56,311.96"/></clipPath></defs>
<polyline points="371.81,127.39 674.07,266.35" fill="none" stroke="#f08c8c" stroke-width="1.3" />
<polyline points="674.07,266.95 548.56,311.36" fill="none" stroke="#f0a0a0" stroke-width="0.8" />
<polygon points="246.30,173.00 371.81,128.59 674.07,267.55 548.56,311.96" fill="#95586b" />
<polyline points="246.30,173.00 257.93,178.34 269.55,183.69 281.18,189.03 292.80,194.38 304.43,199.72 316.05,205.07 327.68,210.41 339.30,215.76 350.93,221.10 362.55,226.45 374.18,231.79 385.80,237.14 397.43,242.48 409.05,247.82 420.68,253.17 432.30,258.51 443.93,263.86 455.55,269.20 467.18,274.55 478.80,279.89 490.43,285.24 502.06,290.58 513.68,295.93 525.31,301.27 536.93,306.62 548.56,311.96" fill="none" stroke="#5c2f43" stroke-width="0.65" stroke-opacity="0.85"/>
<polyline points="257.71,168.96 266.27,174.60 279.24,180.94 291.98,185.37 301.81,189.20 312.88,194.65 322.63,200.80 340.62,205.49 346.97,211.35 365.72,216.44 373.77,222.82 385.51,229.93 397.94,234.46 404.58,238.35 421.29,242.63 430.81,248.15 443.72,255.10 452.99,260.87 462.76,264.67 479.16,271.12 489.70,275.20 500.38,281.50 516.29,286.87 524.12,291.08 539.10,296.50 548.34,303.61 559.97,307.92" fill="none" stroke="#5c2f43" stroke-width="0.65" stroke-opacity="0.85"/>
<polyline points="269.12,164.93 281.12,172.30 293.46,174.86 302.00,180.10 314.08,184.77 329.15,192.17 339.84,198.34 352.14,202.64 362.30,207.98 378.29,212.95 386.21,217.96 395.77,222.17 412.39,228.39 420.74,235.68 432.25,239.10 440.62,243.96 450.99,250.40 465.91,254.09 474.81,260.72 491.62,265.41 499.00,270.86 515.82,276.48 528.82,282.55 534.77,287.47 549.64,292.02 560.20,300.45 571.38,303.89" fill="none" stroke="#5c2f43" stroke-width="0.65" stroke-opacity="0.85"/>
<polyline points="280.53,160.89 288.76,165.98 302.21,170.93 314.48,177.65 323.80,181.18 338.33,187.14 353.93,193.71 362.70,198.09 371.84,205.04 389.05,209.42 400.64,214.66 407.21,219.62 418.64,223.73 426.64,230.17 439.65,235.69 451.35,241.60 461.68,245.87 475.14,251.02 489.40,255.09 499.94,263.47 510.75,267.47 521.65,273.58 541.17,278.32 547.63,283.76 554.86,288.95 568.88,294.60 582.79,299.85" fill="none" stroke="#5c2f43" stroke-width="0.65" stroke-opacity="0.85"/>
<polyline points="291.94,156.85 303.36,163.75 315.25,165.37 324.86,173.71 335.85,179.34 353.09,182.63 364.88,189.43 371.20,193.94 384.73,198.18 398.42,204.45 405.59,210.45 424.45,215.41 435.23,221.24 446.27,226.64 453.29,230.94 462.70,237.65 474.01,241.63 489.39,246.69 503.41,254.33 518.16,258.48 526.16,265.19 532.89,268.96 544.25,274.29 562.41,279.25 572.71,286.03 585.21,290.22 594.20,295.81" fill="none" stroke="#5c2f43" stroke-width="0.65" stroke-opacity="0.85"/>
<polyline points="303.35,152.81 313.64,156.76 330.56,163.95 339.48,169.53 349.80,172.76 362.35,178.47 375.09,186.30 386.86,189.03 395.62,196.84 403.82,200.71 423.68,206.64 431.22,210.01 446.46,217.84 453.94,221.81 461.15,227.73 481.24,233.87 492.10,237.48 502.84,242.72 512.68,250.46 521.62,254.17 534.94,258.86 545.66,264.61 559.52,268.59 569.67,275.46 585.24,280.44 596.04,285.34 605.61,291.78" fill="none" stroke="#5c2f43" stroke-width="0.65" stroke-opacity="0.85"/>
<polyline points="314.76,148.78 326.59,154.06 335.26,160.55 347.41,165.33 360.30,168.26 370.91,174.72 386.10,181.30 395.28,185.71 409.77,191.07 417.57,195.75 428.29,202.06 444.19,208.25 456.16,212.52 467.84,219.43 478.17,223.88 490.36,228.57 500.70,234.10 514.91,238.65 527.37,244.69 536.65,251.96 550.25,254.88 558.60,262.65 568.07,265.52 578.22,271.16 592.42,275.60 609.34,282.28 617.02,287.74" fill="none" stroke="#5c2f43" stroke-width="0.65" stroke-opacity="0.85"/>
<polyline points="326.17,144.74 337.18,148.75 348.17,156.59 365.97,160.76 373.83,164.45 383.66,171.23 400.63,177.35 405.26,181.44 418.30,187.88 428.03,192.45 440.78,199.77 453.99,203.80 462.00,208.01 478.06,214.51 489.41,217.43 504.97,224.65 508.58,229.74 522.92,233.84 531.94,241.14 549.08,245.22 559.00,252.96 570.87,255.20 583.52,262.08 588.63,267.56 605.77,273.65 617.06,276.34 628.43,283.70" fill="none" stroke="#5c2f43" stroke-width="0.65" stroke-opacity="0.85"/>
<polyline points="337.58,140.70 351.76,145.75 360.66,149.58 372.23,154.87 382.86,162.31 398.56,166.66 403.83,172.97 417.54,178.74 426.39,183.18 437.93,188.29 451.63,194.08 465.64,200.60 475.16,205.52 484.98,210.81 496.05,215.92 513.56,221.36 521.71,225.48 535.26,233.50 548.20,237.86 560.44,241.53 569.54,247.31 585.64,252.40 594.46,257.18 606.92,263.87 615.15,269.05 623.53,273.97 639.84,279.66" fill="none" stroke="#5c2f43" stroke-width="0.65" stroke-opacity="0.85"/>
<polyline points="348.99,136.67 359.68,140.41 368.87,147.45 383.61,150.92 398.57,158.63 404.37,163.38 417.36,168.29 428.15,173.32 443.45,177.84 456.52,185.87 466.62,188.48 474.96,195.28 485.02,199.78 500.00,206.08 510.12,210.72 519.22,216.07 532.12,221.35 541.22,227.37 555.56,232.94 570.52,238.37 583.83,243.86 596.59,248.65 603.10,254.34 616.96,261.57 630.10,265.21 639.10,268.41 651.25,275.63" fill="none" stroke="#5c2f43" stroke-width="0.65" stroke-opacity="0.85"/>
<polyline points="360.40,132.63 374.96,138.70 386.82,143.25 393.42,147.69 408.93,153.31 422.17,159.44 432.97,164.08 443.95,170.10 449.10,175.69 462.16,180.09 476.48,184.36 489.37,191.30 501.69,196.70 508.50,203.13 526.29,207.69 535.01,212.73 544.69,219.47 557.86,224.62 565.90,228.25 580.79,235.39 597.08,239.13 603.80,245.10 617.14,249.77 629.96,255.99 637.67,262.16 647.61,265.87 662.66,271.59" fill="none" stroke="#5c2f43" stroke-width="0.65" stroke-opacity="0.85"/>
<polyline points="371.81,128.59 383.44,133.94 395.06,139.28 406.69,144.63 418.31,149.97 429.94,155.32 441.57,160.66 453.19,166.01 464.82,171.35 476.44,176.69 488.07,182.04 499.69,187.38 511.32,192.73 522.94,198.07 534.57,203.42 546.19,208.76 557.82,214.11 569.44,219.45 581.07,224.80 592.69,230.14 604.32,235.49 615.94,240.83 627.57,246.17 639.19,251.52 650.82,256.86 662.44,262.21 674.07,267.55" fill="none" stroke="#5c2f43" stroke-width="0.65" stroke-opacity="0.85"/>
<polyline points="246.30,173.00 257.71,168.96 269.12,164.93 280.53,160.89 291.94,156.85 303.35,152.81 314.76,148.78 326.17,144.74 337.58,140.70 348.99,136.67 360.40,132.63 371.81,128.59" fill="none" stroke="#5c2f43" stroke-width="0.65" stroke-opacity="0.85"/>
<polyline points="257.93,178.34 266.27,174.60 281.12,172.30 288.76,165.98 303.36,163.75 313.64,156.76 326.59,154.06 337.18,148.75 351.76,145.75 359.68,140.41 374.96,138.70 383.44,133.94" fill="none" stroke="#5c2f43" stroke-width="0.65" stroke-opacity="0.85"/>
<polyline points="269.55,183.69 279.24,180.94 293.46,174.86 302.21,170.93 315.25,165.37 330.56,163.95 335.26,160.55 348.17,156.59 360.66,149.58 368.87,147.45 386.82,143.25 395.06,139.28" fill="none" stroke="#5c2f43" stroke-width="0.65" stroke-opacity="0.85"/>
<polyline points="281.18,189.03 291.98,185.37 302.00,180.10 314.48,177.65 324.86,173.71 339.48,169.53 347.41,165.33 365.97,160.76 372.23,154.87 383.61,150.92 393.42,147.69 406.69,144.63" fill="none" stroke="#5c2f43" stroke-width="0.65" stroke-opacity="0.85"/>
<polyline points="292.80,194.38 301.81,189.20 314.08,184.77 323.80,181.18 335.85,179.34 349.80,172.76 360.30,168.26 373.83,164.45 382.86,162.31 398.57,158.63 408.93,153.31 418.31,149.97" fill="none" stroke="#5c2f43" stroke-width="0.65" stroke-opacity="0.85"/>
<polyline points="304.43,199.72 312.88,194.65 329.15,192.17 338.33,187.14 353.09,182.63 362.35,178.47 370.91,174.72 383.66,171.23 398.56,166.66 404.37,163.38 422.17,159.44 429.94,155.32" fill="none" stroke="#5c2f43" stroke-width="0.65" stroke-opacity="0.85"/>
<polyline points="316.05,205.07 322.63,200.80 339.84,198.34 353.93,193.71 364.88,189.43 375.09,186.30 386.10,181.30 400.63,177.35 403.83,172.97 417.36,168.29 432.97,164.08 441.57,160.66" fill="none" stroke="#5c2f43" stroke-width="0.65" stroke-opacity="0.85"/>
<polyline points="327.68,210.41 340.62,205.49 352.14,202.64 362.70,198.09 371.20,193.94 386.86,189.03 395.28,185.71 405.26,181.44 417.54,178.74 428.15,173.32 443.95,170.10 453.19,166.01" fill="none" stroke="#5c2f43" stroke-width="0.65" stroke-opacity="0.85"/>
<polyline points="339.30,215.76 346.97,211.35 362.30,207.98 371.84,205.04 384.73,198.18 395.62,196.84 409.77,191.07 418.30,187.88 426.39,183.18 443.45,177.84 449.10,175.69 464.82,171.35" fill="none" stroke="#5c2f43" stroke-width="0.65" stroke-opacity="0.85"/>
<polyline points="350.93,221.10 365.72,216.44 378.29,212.95 389.05,209.42 398.42,204.45 403.82,200.71 417.57,195.75 428.03,192.45 437.93,188.29 456.52,185.87 462.16,180.09 476.44,176.69" fill="none" stroke="#5c2f43" stroke-width="0.65" stroke-opacity="0.85"/>
<polyline points="362.55,226.45 373.77,222.82 386.21,217.96 400.64,214.66 405.59,210.45 423.68,206.64 428.29,202.06 440.78,199.77 451.63,194.08 466.62,188.48 476.48,184.36 488.07,182.04" fill="none" stroke="#5c2f43" stroke-width="0.65" stroke-opacity="0.85"/>
<polyline points="374.18,231.79 385.51,229.93 395.77,222.17 407.21,219.62 424.45,215.41 431.22,210.01 444.19,208.25 453.99,203.80 465.64,200.60 474.96,195.28 489.37,191.30 499.69,187.38" fill="none" stroke="#5c2f43" stroke-width="0.65" stroke-opacity="0.85"/>
<polyline points="385.80,237.14 397.94,234.46 412.39,228.39 418.64,223.73 435.23,221.24 446.46,217.84 456.16,212.52 462.00,208.01 475.16,205.52 485.02,199.78 501.69,196.70 511.32,192.73" fill="none" stroke="#5c2f43" stroke-width="0.65" stroke-opacity="0.85"/>
<polyline points="397.43,242.48 404.58,238.35 420.74,235.68 426.64,230.17 446.27,226.64 453.94,221.81 467.84,219.43 478.06,214.51 484.98,210.81 500.00,206.08 508.50,203.13 522.94,198.07" fill="none" stroke="#5c2f43" stroke-width="0.65" stroke-opacity="0.85"/>
<polyline points="409.05,247.82 421.29,242.63 432.25,239.10 439.65,235.69 453.29,230.94 461.15,227.73 478.17,223.88 489.41,217.43 496.05,215.92 510.12,210.72 526.29,207.69 534.57,203.42" fill="none" stroke="#5c2f43" stroke-width="0.65" stroke-opacity="0.85"/>
<polyline points="420.68,253.17 430.81,248.15 440.62,243.96 451.35,241.60 462.70,237.65 481.24,233.87 490.36,228.57 504.97,224.65 513.56,221.36 519.22,216.07 535.01,212.73 546.19,208.76" fill="none" stroke="#5c2f43" stroke-width="0.65" stroke-opacity="0.85"/>
<polyline points="432.30,258.51 443.72,255.10 450.99,250.40 461.68,245.87 474.01,241.63 492.10,237.48 500.70,234.10 508.58,229.74 521.71,225.48 532.12,221.35 544.69,219.47 557.82,214.11" fill="none" stroke="#5c2f43" stroke-width="0.65" stroke-opacity="0.85"/>
<polyline points="443.93,263.86 452.99,260.87 465.91,254.09 475.14,251.02 489.39,246.69 502.84,242.72 514.91,238.65 522.92,233.84 535.26,233.50 541.22,227.37 557.86,224.62 569.44,219.45" fill="none" stroke="#5c2f43" stroke-width="0.65" stroke-opacity="0.85"/>
<polyline points="455.55,269.20 462.76,264.67 474.81,260.72 489.40,255.09 503.41,254.33 512.68,250.46 527.37,244.69 531.94,241.14 548.20,237.86 555.56,232.94 565.90,228.25 581.07,224.80" fill="none" stroke="#5c2f43" stroke-width="0.65" stroke-opacity="0.85"/>
<polyline points="467.18,274.55 479.16,271.12 491.62,265.41 499.94,263.47 518.16,258.48 521.62,254.17 536.65,251.96 549.08,245.22 560.44,241.53 570.52,238.37 580.79,235.39 592.69,230.14" fill="none" stroke="#5c2f43" stroke-width="0.65" stroke-opacity="0.85"/>
<polyline points="478.80,279.89 489.70,275.20 499.00,270.86 510.75,267.47 526.16,265.19 534.94,258.86 550.25,254.88 559.00,252.96 569.54,247.31 583.83,243.86 597.08,239.13 604.32,235.49" fill="none" stroke="#5c2f43" stroke-width="0.65" stroke-opacity="0.85"/>
<polyline points="490.43,285.24 500.38,281.50 515.82,276.48 521.65,273.58 532.89,268.96 545.66,264.61 558.60,262.65 570.87,255.20 585.64,252.40 596.59,248.65 603.80,245.10 615.94,240.83" fill="none" stroke="#5c2f43" stroke-width="0.65" stroke-opacity="0.85"/>
<polyline points="502.06,290.58 516.29,286.87 528.82,282.55 541.17,278.32 544.25,274.29 559.52,268.59 568.07,265.52 583.52,262.08 594.46,257.18 603.10,254.34 617.14,249.77 627.57,246.17" fill="none" stroke="#5c2f43" stroke-width="0.65" stroke-opacity="0.85"/>
<polyline points="513.68,295.93 524.12,291.08 534.77,287.47 547.63,283.76 562.41,279.25 569.67,275.46 578.22,271.16 588.63,267.56 606.92,263.87 616.96,261.57 629.96,255.99 639.19,251.52" fill="none" stroke="#5c2f43" stroke-width="0.65" stroke-opacity="0.85"/>
<polyline points="525.31,301.27 539.10,296.50 549.64,292.02 554.86,288.95 572.71,286.03 585.24,280.44 592.42,275.60 605.77,273.65 615.15,269.05 630.10,265.21 637.67,262.16 650.82,256.86" fill="none" stroke="#5c2f43" stroke-width="0.65" stroke-opacity="0.85"/>
<polyline points="536.93,306.62 548.34,303.61 560.20,300.45 568.88,294.60 585.21,290.22 596.04,285.34 609.34,282.28 617.06,276.34 623.53,273.97 639.10,268.41 647.61,265.87 662.44,262.21" fill="none" stroke="#5c2f43" stroke-width="0.65" stroke-opacity="0.85"/>
<polyline points="548.56,311.96 559.97,307.92 571.38,303.89 582.79,299.85 594.20,295.81 605.61,291.78 617.02,287.74 628.43,283.70 639.84,279.66 651.25,275.63 662.66,271.59 674.07,267.55" fill="none" stroke="#5c2f43" stroke-width="0.65" stroke-opacity="0.85"/>
<polyline points="521.62,254.17 526.16,265.19" fill="none" stroke="#5c2f43" stroke-width="0.55" stroke-opacity="0.8"/>
<polyline points="420.68,253.17 443.72,255.10" fill="none" stroke="#5c2f43" stroke-width="0.55" stroke-opacity="0.8"/>
<polyline points="532.89,268.96 559.52,268.59" fill="none" stroke="#5c2f43" stroke-width="0.55" stroke-opacity="0.8"/>
<polyline points="521.65,273.58 544.25,274.29" fill="none" stroke="#5c2f43" stroke-width="0.55" stroke-opacity="0.8"/>
<polyline points="437.93,188.29 466.62,188.48" fill="none" stroke="#5c2f43" stroke-width="0.55" stroke-opacity="0.8"/>
<polyline points="605.77,273.65 623.53,273.97" fill="none" stroke="#5c2f43" stroke-width="0.55" stroke-opacity="0.8"/>
<polyline points="403.83,172.97 428.15,173.32" fill="none" stroke="#5c2f43" stroke-width="0.55" stroke-opacity="0.8"/>
<polyline points="430.81,248.15 450.99,250.40" fill="none" stroke="#5c2f43" stroke-width="0.55" stroke-opacity="0.8"/>
<polyline points="360.66,149.58 365.97,160.76" fill="none" stroke="#5c2f43" stroke-width="0.55" stroke-opacity="0.8"/>
<polyline points="418.30,187.88 437.93,188.29" fill="none" stroke="#5c2f43" stroke-width="0.55" stroke-opacity="0.8"/>
<polyline points="315.25,165.37 314.48,177.65" fill="none" stroke="#5c2f43" stroke-width="0.55" stroke-opacity="0.8"/>
<polyline points="547.63,283.76 549.64,292.02" fill="none" stroke="#5c2f43" stroke-width="0.55" stroke-opacity="0.8"/>
<polyline points="360.30,168.26 362.35,178.47" fill="none" stroke="#5c2f43" stroke-width="0.55" stroke-opacity="0.8"/>
<polyline points="544.69,219.47 569.44,219.45" fill="none" stroke="#5c2f43" stroke-width="0.55" stroke-opacity="0.8"/>
<polyline points="516.29,286.87 534.77,287.47" fill="none" stroke="#5c2f43" stroke-width="0.55" stroke-opacity="0.8"/>
<polyline points="504.97,224.65 521.71,225.48" fill="none" stroke="#5c2f43" stroke-width="0.55" stroke-opacity="0.8"/>
<polyline points="280.53,160.89 281.12,172.30" fill="none" stroke="#5c2f43" stroke-width="0.55" stroke-opacity="0.8"/>
<polyline points="526.29,207.69 546.19,208.76" fill="none" stroke="#5c2f43" stroke-width="0.55" stroke-opacity="0.8"/>
<polyline points="420.74,235.68 439.65,235.69" fill="none" stroke="#5c2f43" stroke-width="0.55" stroke-opacity="0.8"/>
<polyline points="347.41,165.33 349.80,172.76" fill="none" stroke="#5c2f43" stroke-width="0.55" stroke-opacity="0.8"/>
<polyline points="373.77,222.82 374.18,231.79" fill="none" stroke="#5c2f43" stroke-width="0.55" stroke-opacity="0.8"/>
<polyline points="365.97,160.76 360.30,168.26" fill="none" stroke="#5c2f43" stroke-width="0.55" stroke-opacity="0.8"/>
<polyline points="541.17,278.32 562.41,279.25" fill="none" stroke="#5c2f43" stroke-width="0.55" stroke-opacity="0.8"/>
<polyline points="384.73,198.18 403.82,200.71" fill="none" stroke="#5c2f43" stroke-width="0.55" stroke-opacity="0.8"/>
<polyline points="462.00,208.01 467.84,219.43" fill="none" stroke="#5c2f43" stroke-width="0.55" stroke-opacity="0.8"/>
<polyline points="368.87,147.45 393.42,147.69" fill="none" stroke="#5c2f43" stroke-width="0.55" stroke-opacity="0.8"/>
<polyline points="592.42,275.60 617.06,276.34" fill="none" stroke="#5c2f43" stroke-width="0.55" stroke-opacity="0.8"/>
<polyline points="339.30,215.76 365.72,216.44" fill="none" stroke="#5c2f43" stroke-width="0.55" stroke-opacity="0.8"/>
<polyline points="476.44,176.69 476.48,184.36" fill="none" stroke="#5c2f43" stroke-width="0.55" stroke-opacity="0.8"/>
<polyline points="362.70,198.09 362.30,207.98" fill="none" stroke="#5c2f43" stroke-width="0.55" stroke-opacity="0.8"/>
<polyline points="500.70,234.10 522.92,233.84" fill="none" stroke="#5c2f43" stroke-width="0.55" stroke-opacity="0.8"/>
<polyline points="609.34,282.28 605.61,291.78" fill="none" stroke="#5c2f43" stroke-width="0.55" stroke-opacity="0.8"/>
<polyline points="548.34,303.61 548.56,311.96" fill="none" stroke="#5c2f43" stroke-width="0.55" stroke-opacity="0.8"/>
<polyline points="522.92,233.84 527.37,244.69" fill="none" stroke="#5c2f43" stroke-width="0.55" stroke-opacity="0.8"/>
<polyline points="281.12,172.30 279.24,180.94" fill="none" stroke="#5c2f43" stroke-width="0.55" stroke-opacity="0.8"/>
<polyline points="489.41,217.43 490.36,228.57" fill="none" stroke="#5c2f43" stroke-width="0.55" stroke-opacity="0.8"/>
<polyline points="510.75,267.47 515.82,276.48" fill="none" stroke="#5c2f43" stroke-width="0.55" stroke-opacity="0.8"/>
<polyline points="351.76,145.75 348.17,156.59" fill="none" stroke="#5c2f43" stroke-width="0.55" stroke-opacity="0.8"/>
<polyline points="382.86,162.31 404.37,163.38" fill="none" stroke="#5c2f43" stroke-width="0.55" stroke-opacity="0.8"/>
<polyline points="428.29,202.06 453.99,203.80" fill="none" stroke="#5c2f43" stroke-width="0.55" stroke-opacity="0.8"/>
<polyline points="331.80,142.75 634.06,281.71" fill="none" stroke="#7d7a55" stroke-width="0.8" stroke-opacity="0.8"/>
<polyline points="321.86,207.74 407.36,177.49" fill="none" stroke="#7d7a55" stroke-width="0.8" stroke-opacity="0.8"/>
<polyline points="397.43,242.48 482.93,212.23" fill="none" stroke="#7d7a55" stroke-width="0.8" stroke-opacity="0.8"/>
<polyline points="472.99,277.22 558.49,246.97" fill="none" stroke="#7d7a55" stroke-width="0.8" stroke-opacity="0.8"/>
<circle cx="246.30" cy="173.40" r="1.8" fill="none" stroke="#a84aa8" stroke-width="0.8" />
<circle cx="257.93" cy="178.74" r="1.8" fill="none" stroke="#a84aa8" stroke-width="0.8" />
<circle cx="269.55" cy="184.09" r="1.8" fill="none" stroke="#a84aa8" stroke-width="0.8" />
<circle cx="281.18" cy="189.43" r="1.8" fill="none" stroke="#a84aa8" stroke-width="0.8" />
<circle cx="292.80" cy="194.78" r="1.8" fill="none" stroke="#a84aa8" stroke-width="0.8" />
<circle cx="304.43" cy="200.12" r="1.8" fill="none" stroke="#a84aa8" stroke-width="0.8" />
<circle cx="316.05" cy="205.47" r="1.8" fill="none" stroke="#a84aa8" stroke-width="0.8" />
<circle cx="327.68" cy="210.81" r="1.8" fill="none" stroke="#a84aa8" stroke-width="0.8" />
<circle cx="339.30" cy="216.16" r="1.8" fill="none" stroke="#a84aa8" stroke-width="0.8" />
<circle cx="350.93" cy="221.50" r="1.8" fill="none" stroke="#a84aa8" stroke-width="0.8" />
<circle cx="362.55" cy="226.85" r="1.8" fill="none" stroke="#a84aa8" stroke-width="0.8" />
<circle cx="374.18" cy="232.19" r="1.8" fill="none" stroke="#a84aa8" stroke-width="0.8" />
<circle cx="385.80" cy="237.54" r="1.8" fill="none" stroke="#a84aa8" stroke-width="0.8" />
<circle cx="397.43" cy="242.88" r="1.8" fill="none" stroke="#a84aa8" stroke-width="0.8" />
<circle cx="409.05" cy="248.22" r="1.8" fill="none" stroke="#a84aa8" stroke-width="0.8" />
<circle cx="420.68" cy="253.57" r="1.8" fill="none" stroke="#a84aa8" stroke-width="0.8" />
<circle cx="432.30" cy="258.91" r="1.8" fill="none" stroke="#a84aa8" stroke-width="0.8" />
<circle cx="443.93" cy="264.26" r="1.8" fill="none" stroke="#a84aa8" stroke-width="0.8" />
<circle cx="455.55" cy="269.60" r="1.8" fill="none" stroke="#a84aa8" stroke-width="0.8" />
<circle cx="467.18" cy="274.95" r="1.8" fill="none" stroke="#a84aa8" stroke-width="0.8" />
<circle cx="478.80" cy="280.29" r="1.8" fill="none" stroke="#a84aa8" stroke-width="0.8" />
<circle cx="490.43" cy="285.64" r="1.8" fill="none" stroke="#a84aa8" stroke-width="0.8" />
<circle cx="502.06" cy="290.98" r="1.8" fill="none" stroke="#a84aa8" stroke-width="0.8" />
<circle cx="513.68" cy="296.33" r="1.8" fill="none" stroke="#a84aa8" stroke-width="0.8" />
<circle cx="525.31" cy="301.67" r="1.8" fill="none" stroke="#a84aa8" stroke-width="0.8" />
<circle cx="536.93" cy="307.02" r="1.8" fill="none" stroke="#a84aa8" stroke-width="0.8" />
<circle cx="548.56" cy="312.36" r="1.8" fill="none" stroke="#a84aa8" stroke-width="0.8" />
<circle cx="257.71" cy="169.36" r="1.8" fill="none" stroke="#a84aa8" stroke-width="0.8" />
<path d="M264.27,175.20 A2.0,2.0 0 0 1 268.27,175.20" fill="none" stroke="#a038a2" stroke-width="1.05"/>
<path d="M277.24,181.54 A2.0,2.0 0 0 1 281.24,181.54" fill="none" stroke="#a038a2" stroke-width="1.05"/>
<path d="M289.98,185.97 A2.0,2.0 0 0 1 293.98,185.97" fill="none" stroke="#a038a2" stroke-width="1.05"/>
<path d="M299.81,189.80 A2.0,2.0 0 0 1 303.81,189.80" fill="none" stroke="#a038a2" stroke-width="1.05"/>
<path d="M310.88,195.25 A2.0,2.0 0 0 1 314.88,195.25" fill="none" stroke="#a038a2" stroke-width="1.05"/>
<path d="M320.63,201.40 A2.0,2.0 0 0 1 324.63,201.40" fill="none" stroke="#a038a2" stroke-width="1.05"/>
<path d="M338.62,206.09 A2.0,2.0 0 0 1 342.62,206.09" fill="none" stroke="#a038a2" stroke-width="1.05"/>
<path d="M344.97,211.95 A2.0,2.0 0 0 1 348.97,211.95" fill="none" stroke="#a038a2" stroke-width="1.05"/>
<path d="M363.72,217.04 A2.0,2.0 0 0 1 367.72,217.04" fill="none" stroke="#a038a2" stroke-width="1.05"/>
<path d="M371.77,223.42 A2.0,2.0 0 0 1 375.77,223.42" fill="none" stroke="#a038a2" stroke-width="1.05"/>
<path d="M383.51,230.53 A2.0,2.0 0 0 1 387.51,230.53" fill="none" stroke="#a038a2" stroke-width="1.05"/>
<path d="M395.94,235.06 A2.0,2.0 0 0 1 399.94,235.06" fill="none" stroke="#a038a2" stroke-width="1.05"/>
<path d="M402.58,238.95 A2.0,2.0 0 0 1 406.58,238.95" fill="none" stroke="#a038a2" stroke-width="1.05"/>
<path d="M419.29,243.23 A2.0,2.0 0 0 1 423.29,243.23" fill="none" stroke="#a038a2" stroke-width="1.05"/>
<path d="M428.81,248.75 A2.0,2.0 0 0 1 432.81,248.75" fill="none" stroke="#a038a2" stroke-width="1.05"/>
<path d="M441.72,255.70 A2.0,2.0 0 0 1 445.72,255.70" fill="none" stroke="#a038a2" stroke-width="1.05"/>
<path d="M450.99,261.47 A2.0,2.0 0 0 1 454.99,261.47" fill="none" stroke="#a038a2" stroke-width="1.05"/>
<path d="M460.76,265.27 A2.0,2.0 0 0 1 464.76,265.27" fill="none" stroke="#a038a2" stroke-width="1.05"/>
<path d="M477.16,271.72 A2.0,2.0 0 0 1 481.16,271.72" fill="none" stroke="#a038a2" stroke-width="1.05"/>
<path d="M487.70,275.80 A2.0,2.0 0 0 1 491.70,275.80" fill="none" stroke="#a038a2" stroke-width="1.05"/>
<path d="M498.38,282.10 A2.0,2.0 0 0 1 502.38,282.10" fill="none" stroke="#a038a2" stroke-width="1.05"/>
<path d="M514.29,287.47 A2.0,2.0 0 0 1 518.29,287.47" fill="none" stroke="#a038a2" stroke-width="1.05"/>
<path d="M522.12,291.68 A2.0,2.0 0 0 1 526.12,291.68" fill="none" stroke="#a038a2" stroke-width="1.05"/>
<path d="M537.10,297.10 A2.0,2.0 0 0 1 541.10,297.10" fill="none" stroke="#a038a2" stroke-width="1.05"/>
<path d="M546.34,304.21 A2.0,2.0 0 0 1 550.34,304.21" fill="none" stroke="#a038a2" stroke-width="1.05"/>
<circle cx="559.97" cy="308.32" r="1.8" fill="none" stroke="#a84aa8" stroke-width="0.8" />
<circle cx="269.12" cy="165.33" r="1.8" fill="none" stroke="#a84aa8" stroke-width="0.8" />
<path d="M279.12,172.90 A2.0,2.0 0 0 1 283.12,172.90" fill="none" stroke="#a038a2" stroke-width="1.05"/>
<path d="M291.46,175.46 A2.0,2.0 0 0 1 295.46,175.46" fill="none" stroke="#a038a2" stroke-width="1.05"/>
<path d="M300.00,180.70 A2.0,2.0 0 0 1 304.00,180.70" fill="none" stroke="#a038a2" stroke-width="1.05"/>
<path d="M312.08,185.37 A2.0,2.0 0 0 1 316.08,185.37" fill="none" stroke="#a038a2" stroke-width="1.05"/>
<path d="M327.15,192.77 A2.0,2.0 0 0 1 331.15,192.77" fill="none" stroke="#a038a2" stroke-width="1.05"/>
<path d="M337.84,198.94 A2.0,2.0 0 0 1 341.84,198.94" fill="none" stroke="#a038a2" stroke-width="1.05"/>
<path d="M350.14,203.24 A2.0,2.0 0 0 1 354.14,203.24" fill="none" stroke="#a038a2" stroke-width="1.05"/>
<path d="M360.30,208.58 A2.0,2.0 0 0 1 364.30,208.58" fill="none" stroke="#a038a2" stroke-width="1.05"/>
<path d="M376.29,213.55 A2.0,2.0 0 0 1 380.29,213.55" fill="none" stroke="#a038a2" stroke-width="1.05"/>
<path d="M384.21,218.56 A2.0,2.0 0 0 1 388.21,218.56" fill="none" stroke="#a038a2" stroke-width="1.05"/>
<path d="M393.77,222.77 A2.0,2.0 0 0 1 397.77,222.77" fill="none" stroke="#a038a2" stroke-width="1.05"/>
<path d="M410.39,228.99 A2.0,2.0 0 0 1 414.39,228.99" fill="none" stroke="#a038a2" stroke-width="1.05"/>
<path d="M418.74,236.28 A2.0,2.0 0 0 1 422.74,236.28" fill="none" stroke="#a038a2" stroke-width="1.05"/>
<path d="M430.25,239.70 A2.0,2.0 0 0 1 434.25,239.70" fill="none" stroke="#a038a2" stroke-width="1.05"/>
<path d="M438.62,244.56 A2.0,2.0 0 0 1 442.62,244.56" fill="none" stroke="#a038a2" stroke-width="1.05"/>
<path d="M448.99,251.00 A2.0,2.0 0 0 1 452.99,251.00" fill="none" stroke="#a038a2" stroke-width="1.05"/>
<path d="M463.91,254.69 A2.0,2.0 0 0 1 467.91,254.69" fill="none" stroke="#a038a2" stroke-width="1.05"/>
<path d="M472.81,261.32 A2.0,2.0 0 0 1 476.81,261.32" fill="none" stroke="#a038a2" stroke-width="1.05"/>
<path d="M489.62,266.01 A2.0,2.0 0 0 1 493.62,266.01" fill="none" stroke="#a038a2" stroke-width="1.05"/>
<path d="M497.00,271.46 A2.0,2.0 0 0 1 501.00,271.46" fill="none" stroke="#a038a2" stroke-width="1.05"/>
<path d="M513.82,277.08 A2.0,2.0 0 0 1 517.82,277.08" fill="none" stroke="#a038a2" stroke-width="1.05"/>
<path d="M526.82,283.15 A2.0,2.0 0 0 1 530.82,283.15" fill="none" stroke="#a038a2" stroke-width="1.05"/>
<path d="M532.77,288.07 A2.0,2.0 0 0 1 536.77,288.07" fill="none" stroke="#a038a2" stroke-width="1.05"/>
<path d="M547.64,292.62 A2.0,2.0 0 0 1 551.64,292.62" fill="none" stroke="#a038a2" stroke-width="1.05"/>
<path d="M558.20,301.05 A2.0,2.0 0 0 1 562.20,301.05" fill="none" stroke="#a038a2" stroke-width="1.05"/>
<circle cx="571.38" cy="304.29" r="1.8" fill="none" stroke="#a84aa8" stroke-width="0.8" />
<circle cx="280.53" cy="161.29" r="1.8" fill="none" stroke="#a84aa8" stroke-width="0.8" />
<path d="M286.76,166.58 A2.0,2.0 0 0 1 290.76,166.58" fill="none" stroke="#a038a2" stroke-width="1.05"/>
<path d="M300.21,171.53 A2.0,2.0 0 0 1 304.21,171.53" fill="none" stroke="#a038a2" stroke-width="1.05"/>
<path d="M312.48,178.25 A2.0,2.0 0 0 1 316.48,178.25" fill="none" stroke="#a038a2" stroke-width="1.05"/>
<path d="M321.80,181.78 A2.0,2.0 0 0 1 325.80,181.78" fill="none" stroke="#a038a2" stroke-width="1.05"/>
<path d="M336.33,187.74 A2.0,2.0 0 0 1 340.33,187.74" fill="none" stroke="#a038a2" stroke-width="1.05"/>
<path d="M351.93,194.31 A2.0,2.0 0 0 1 355.93,194.31" fill="none" stroke="#a038a2" stroke-width="1.05"/>
<path d="M360.70,198.69 A2.0,2.0 0 0 1 364.70,198.69" fill="none" stroke="#a038a2" stroke-width="1.05"/>
<path d="M369.84,205.64 A2.0,2.0 0 0 1 373.84,205.64" fill="none" stroke="#a038a2" stroke-width="1.05"/>
<path d="M387.05,210.02 A2.0,2.0 0 0 1 391.05,210.02" fill="none" stroke="#a038a2" stroke-width="1.05"/>
<path d="M398.64,215.26 A2.0,2.0 0 0 1 402.64,215.26" fill="none" stroke="#a038a2" stroke-width="1.05"/>
<path d="M405.21,220.22 A2.0,2.0 0 0 1 409.21,220.22" fill="none" stroke="#a038a2" stroke-width="1.05"/>
<path d="M416.64,224.33 A2.0,2.0 0 0 1 420.64,224.33" fill="none" stroke="#a038a2" stroke-width="1.05"/>
<path d="M424.64,230.77 A2.0,2.0 0 0 1 428.64,230.77" fill="none" stroke="#a038a2" stroke-width="1.05"/>
<path d="M437.65,236.29 A2.0,2.0 0 0 1 441.65,236.29" fill="none" stroke="#a038a2" stroke-width="1.05"/>
<path d="M449.35,242.20 A2.0,2.0 0 0 1 453.35,242.20" fill="none" stroke="#a038a2" stroke-width="1.05"/>
<path d="M459.68,246.47 A2.0,2.0 0 0 1 463.68,246.47" fill="none" stroke="#a038a2" stroke-width="1.05"/>
<path d="M473.14,251.62 A2.0,2.0 0 0 1 477.14,251.62" fill="none" stroke="#a038a2" stroke-width="1.05"/>
<path d="M487.40,255.69 A2.0,2.0 0 0 1 491.40,255.69" fill="none" stroke="#a038a2" stroke-width="1.05"/>
<path d="M497.94,264.07 A2.0,2.0 0 0 1 501.94,264.07" fill="none" stroke="#a038a2" stroke-width="1.05"/>
<path d="M508.75,268.07 A2.0,2.0 0 0 1 512.75,268.07" fill="none" stroke="#a038a2" stroke-width="1.05"/>
<path d="M519.65,274.18 A2.0,2.0 0 0 1 523.65,274.18" fill="none" stroke="#a038a2" stroke-width="1.05"/>
<path d="M539.17,278.92 A2.0,2.0 0 0 1 543.17,278.92" fill="none" stroke="#a038a2" stroke-width="1.05"/>
<path d="M545.63,284.36 A2.0,2.0 0 0 1 549.63,284.36" fill="none" stroke="#a038a2" stroke-width="1.05"/>
<path d="M552.86,289.55 A2.0,2.0 0 0 1 556.86,289.55" fill="none" stroke="#a038a2" stroke-width="1.05"/>
<path d="M566.88,295.20 A2.0,2.0 0 0 1 570.88,295.20" fill="none" stroke="#a038a2" stroke-width="1.05"/>
<circle cx="582.79" cy="300.25" r="1.8" fill="none" stroke="#a84aa8" stroke-width="0.8" />
<circle cx="291.94" cy="157.25" r="1.8" fill="none" stroke="#a84aa8" stroke-width="0.8" />
<path d="M301.36,164.35 A2.0,2.0 0 0 1 305.36,164.35" fill="none" stroke="#a038a2" stroke-width="1.05"/>
<path d="M313.25,165.97 A2.0,2.0 0 0 1 317.25,165.97" fill="none" stroke="#a038a2" stroke-width="1.05"/>
<path d="M322.86,174.31 A2.0,2.0 0 0 1 326.86,174.31" fill="none" stroke="#a038a2" stroke-width="1.05"/>
<path d="M333.85,179.94 A2.0,2.0 0 0 1 337.85,179.94" fill="none" stroke="#a038a2" stroke-width="1.05"/>
<path d="M351.09,183.23 A2.0,2.0 0 0 1 355.09,183.23" fill="none" stroke="#a038a2" stroke-width="1.05"/>
<path d="M362.88,190.03 A2.0,2.0 0 0 1 366.88,190.03" fill="none" stroke="#a038a2" stroke-width="1.05"/>
<path d="M369.20,194.54 A2.0,2.0 0 0 1 373.20,194.54" fill="none" stroke="#a038a2" stroke-width="1.05"/>
<path d="M382.73,198.78 A2.0,2.0 0 0 1 386.73,198.78" fill="none" stroke="#a038a2" stroke-width="1.05"/>
<path d="M396.42,205.05 A2.0,2.0 0 0 1 400.42,205.05" fill="none" stroke="#a038a2" stroke-width="1.05"/>
<path d="M403.59,211.05 A2.0,2.0 0 0 1 407.59,211.05" fill="none" stroke="#a038a2" stroke-width="1.05"/>
<path d="M422.45,216.01 A2.0,2.0 0 0 1 426.45,216.01" fill="none" stroke="#a038a2" stroke-width="1.05"/>
<path d="M433.23,221.84 A2.0,2.0 0 0 1 437.23,221.84" fill="none" stroke="#a038a2" stroke-width="1.05"/>
<path d="M444.27,227.24 A2.0,2.0 0 0 1 448.27,227.24" fill="none" stroke="#a038a2" stroke-width="1.05"/>
<path d="M451.29,231.54 A2.0,2.0 0 0 1 455.29,231.54" fill="none" stroke="#a038a2" stroke-width="1.05"/>
<path d="M460.70,238.25 A2.0,2.0 0 0 1 464.70,238.25" fill="none" stroke="#a038a2" stroke-width="1.05"/>
<path d="M472.01,242.23 A2.0,2.0 0 0 1 476.01,242.23" fill="none" stroke="#a038a2" stroke-width="1.05"/>
<path d="M487.39,247.29 A2.0,2.0 0 0 1 491.39,247.29" fill="none" stroke="#a038a2" stroke-width="1.05"/>
<path d="M501.41,254.93 A2.0,2.0 0 0 1 505.41,254.93" fill="none" stroke="#a038a2" stroke-width="1.05"/>
<path d="M516.16,259.08 A2.0,2.0 0 0 1 520.16,259.08" fill="none" stroke="#a038a2" stroke-width="1.05"/>
<path d="M524.16,265.79 A2.0,2.0 0 0 1 528.16,265.79" fill="none" stroke="#a038a2" stroke-width="1.05"/>
<path d="M530.89,269.56 A2.0,2.0 0 0 1 534.89,269.56" fill="none" stroke="#a038a2" stroke-width="1.05"/>
<path d="M542.25,274.89 A2.0,2.0 0 0 1 546.25,274.89" fill="none" stroke="#a038a2" stroke-width="1.05"/>
<path d="M560.41,279.85 A2.0,2.0 0 0 1 564.41,279.85" fill="none" stroke="#a038a2" stroke-width="1.05"/>
<path d="M570.71,286.63 A2.0,2.0 0 0 1 574.71,286.63" fill="none" stroke="#a038a2" stroke-width="1.05"/>
<path d="M583.21,290.82 A2.0,2.0 0 0 1 587.21,290.82" fill="none" stroke="#a038a2" stroke-width="1.05"/>
<circle cx="594.20" cy="296.21" r="1.8" fill="none" stroke="#a84aa8" stroke-width="0.8" />
<circle cx="303.35" cy="153.22" r="1.8" fill="none" stroke="#a84aa8" stroke-width="0.8" />
<path d="M311.64,157.36 A2.0,2.0 0 0 1 315.64,157.36" fill="none" stroke="#a038a2" stroke-width="1.05"/>
<path d="M328.56,164.55 A2.0,2.0 0 0 1 332.56,164.55" fill="none" stroke="#a038a2" stroke-width="1.05"/>
<path d="M337.48,170.13 A2.0,2.0 0 0 1 341.48,170.13" fill="none" stroke="#a038a2" stroke-width="1.05"/>
<path d="M347.80,173.36 A2.0,2.0 0 0 1 351.80,173.36" fill="none" stroke="#a038a2" stroke-width="1.05"/>
<path d="M360.35,179.07 A2.0,2.0 0 0 1 364.35,179.07" fill="none" stroke="#a038a2" stroke-width="1.05"/>
<path d="M373.09,186.90 A2.0,2.0 0 0 1 377.09,186.90" fill="none" stroke="#a038a2" stroke-width="1.05"/>
<path d="M384.86,189.63 A2.0,2.0 0 0 1 388.86,189.63" fill="none" stroke="#a038a2" stroke-width="1.05"/>
<path d="M393.62,197.44 A2.0,2.0 0 0 1 397.62,197.44" fill="none" stroke="#a038a2" stroke-width="1.05"/>
<path d="M401.82,201.31 A2.0,2.0 0 0 1 405.82,201.31" fill="none" stroke="#a038a2" stroke-width="1.05"/>
<path d="M421.68,207.24 A2.0,2.0 0 0 1 425.68,207.24" fill="none" stroke="#a038a2" stroke-width="1.05"/>
<path d="M429.22,210.61 A2.0,2.0 0 0 1 433.22,210.61" fill="none" stroke="#a038a2" stroke-width="1.05"/>
<path d="M444.46,218.44 A2.0,2.0 0 0 1 448.46,218.44" fill="none" stroke="#a038a2" stroke-width="1.05"/>
<path d="M451.94,222.41 A2.0,2.0 0 0 1 455.94,222.41" fill="none" stroke="#a038a2" stroke-width="1.05"/>
<path d="M459.15,228.33 A2.0,2.0 0 0 1 463.15,228.33" fill="none" stroke="#a038a2" stroke-width="1.05"/>
<path d="M479.24,234.47 A2.0,2.0 0 0 1 483.24,234.47" fill="none" stroke="#a038a2" stroke-width="1.05"/>
<path d="M490.10,238.08 A2.0,2.0 0 0 1 494.10,238.08" fill="none" stroke="#a038a2" stroke-width="1.05"/>
<path d="M500.84,243.32 A2.0,2.0 0 0 1 504.84,243.32" fill="none" stroke="#a038a2" stroke-width="1.05"/>
<path d="M510.68,251.06 A2.0,2.0 0 0 1 514.68,251.06" fill="none" stroke="#a038a2" stroke-width="1.05"/>
<path d="M519.62,254.77 A2.0,2.0 0 0 1 523.62,254.77" fill="none" stroke="#a038a2" stroke-width="1.05"/>
<path d="M532.94,259.46 A2.0,2.0 0 0 1 536.94,259.46" fill="none" stroke="#a038a2" stroke-width="1.05"/>
<path d="M543.66,265.21 A2.0,2.0 0 0 1 547.66,265.21" fill="none" stroke="#a038a2" stroke-width="1.05"/>
<path d="M557.52,269.19 A2.0,2.0 0 0 1 561.52,269.19" fill="none" stroke="#a038a2" stroke-width="1.05"/>
<path d="M567.67,276.06 A2.0,2.0 0 0 1 571.67,276.06" fill="none" stroke="#a038a2" stroke-width="1.05"/>
<path d="M583.24,281.04 A2.0,2.0 0 0 1 587.24,281.04" fill="none" stroke="#a038a2" stroke-width="1.05"/>
<path d="M594.04,285.94 A2.0,2.0 0 0 1 598.04,285.94" fill="none" stroke="#a038a2" stroke-width="1.05"/>
<circle cx="605.61" cy="292.18" r="1.8" fill="none" stroke="#a84aa8" stroke-width="0.8" />
<circle cx="314.76" cy="149.18" r="1.8" fill="none" stroke="#a84aa8" stroke-width="0.8" />
<path d="M324.59,154.66 A2.0,2.0 0 0 1 328.59,154.66" fill="none" stroke="#a038a2" stroke-width="1.05"/>
<path d="M333.26,161.15 A2.0,2.0 0 0 1 337.26,161.15" fill="none" stroke="#a038a2" stroke-width="1.05"/>
<path d="M345.41,165.93 A2.0,2.0 0 0 1 349.41,165.93" fill="none" stroke="#a038a2" stroke-width="1.05"/>
<path d="M358.30,168.86 A2.0,2.0 0 0 1 362.30,168.86" fill="none" stroke="#a038a2" stroke-width="1.05"/>
<path d="M368.91,175.32 A2.0,2.0 0 0 1 372.91,175.32" fill="none" stroke="#a038a2" stroke-width="1.05"/>
<path d="M384.10,181.90 A2.0,2.0 0 0 1 388.10,181.90" fill="none" stroke="#a038a2" stroke-width="1.05"/>
<path d="M393.28,186.31 A2.0,2.0 0 0 1 397.28,186.31" fill="none" stroke="#a038a2" stroke-width="1.05"/>
<path d="M407.77,191.67 A2.0,2.0 0 0 1 411.77,191.67" fill="none" stroke="#a038a2" stroke-width="1.05"/>
<path d="M415.57,196.35 A2.0,2.0 0 0 1 419.57,196.35" fill="none" stroke="#a038a2" stroke-width="1.05"/>
<path d="M426.29,202.66 A2.0,2.0 0 0 1 430.29,202.66" fill="none" stroke="#a038a2" stroke-width="1.05"/>
<path d="M442.19,208.85 A2.0,2.0 0 0 1 446.19,208.85" fill="none" stroke="#a038a2" stroke-width="1.05"/>
<path d="M454.16,213.12 A2.0,2.0 0 0 1 458.16,213.12" fill="none" stroke="#a038a2" stroke-width="1.05"/>
<path d="M465.84,220.03 A2.0,2.0 0 0 1 469.84,220.03" fill="none" stroke="#a038a2" stroke-width="1.05"/>
<path d="M476.17,224.48 A2.0,2.0 0 0 1 480.17,224.48" fill="none" stroke="#a038a2" stroke-width="1.05"/>
<path d="M488.36,229.17 A2.0,2.0 0 0 1 492.36,229.17" fill="none" stroke="#a038a2" stroke-width="1.05"/>
<path d="M498.70,234.70 A2.0,2.0 0 0 1 502.70,234.70" fill="none" stroke="#a038a2" stroke-width="1.05"/>
<path d="M512.91,239.25 A2.0,2.0 0 0 1 516.91,239.25" fill="none" stroke="#a038a2" stroke-width="1.05"/>
<path d="M525.37,245.29 A2.0,2.0 0 0 1 529.37,245.29" fill="none" stroke="#a038a2" stroke-width="1.05"/>
<path d="M534.65,252.56 A2.0,2.0 0 0 1 538.65,252.56" fill="none" stroke="#a038a2" stroke-width="1.05"/>
<path d="M548.25,255.48 A2.0,2.0 0 0 1 552.25,255.48" fill="none" stroke="#a038a2" stroke-width="1.05"/>
<path d="M556.60,263.25 A2.0,2.0 0 0 1 560.60,263.25" fill="none" stroke="#a038a2" stroke-width="1.05"/>
<path d="M566.07,266.12 A2.0,2.0 0 0 1 570.07,266.12" fill="none" stroke="#a038a2" stroke-width="1.05"/>
<path d="M576.22,271.76 A2.0,2.0 0 0 1 580.22,271.76" fill="none" stroke="#a038a2" stroke-width="1.05"/>
<path d="M590.42,276.20 A2.0,2.0 0 0 1 594.42,276.20" fill="none" stroke="#a038a2" stroke-width="1.05"/>
<path d="M607.34,282.88 A2.0,2.0 0 0 1 611.34,282.88" fill="none" stroke="#a038a2" stroke-width="1.05"/>
<circle cx="617.02" cy="288.14" r="1.8" fill="none" stroke="#a84aa8" stroke-width="0.8" />
<circle cx="326.17" cy="145.14" r="1.8" fill="none" stroke="#a84aa8" stroke-width="0.8" />
<path d="M335.18,149.35 A2.0,2.0 0 0 1 339.18,149.35" fill="none" stroke="#a038a2" stroke-width="1.05"/>
<path d="M346.17,157.19 A2.0,2.0 0 0 1 350.17,157.19" fill="none" stroke="#a038a2" stroke-width="1.05"/>
<path d="M363.97,161.36 A2.0,2.0 0 0 1 367.97,161.36" fill="none" stroke="#a038a2" stroke-width="1.05"/>
<path d="M371.83,165.05 A2.0,2.0 0 0 1 375.83,165.05" fill="none" stroke="#a038a2" stroke-width="1.05"/>
<path d="M381.66,171.83 A2.0,2.0 0 0 1 385.66,171.83" fill="none" stroke="#a038a2" stroke-width="1.05"/>
<path d="M398.63,177.95 A2.0,2.0 0 0 1 402.63,177.95" fill="none" stroke="#a038a2" stroke-width="1.05"/>
<path d="M403.26,182.04 A2.0,2.0 0 0 1 407.26,182.04" fill="none" stroke="#a038a2" stroke-width="1.05"/>
<path d="M416.30,188.48 A2.0,2.0 0 0 1 420.30,188.48" fill="none" stroke="#a038a2" stroke-width="1.05"/>
<path d="M426.03,193.05 A2.0,2.0 0 0 1 430.03,193.05" fill="none" stroke="#a038a2" stroke-width="1.05"/>
<path d="M438.78,200.37 A2.0,2.0 0 0 1 442.78,200.37" fill="none" stroke="#a038a2" stroke-width="1.05"/>
<path d="M451.99,204.40 A2.0,2.0 0 0 1 455.99,204.40" fill="none" stroke="#a038a2" stroke-width="1.05"/>
<path d="M460.00,208.61 A2.0,2.0 0 0 1 464.00,208.61" fill="none" stroke="#a038a2" stroke-width="1.05"/>
<path d="M476.06,215.11 A2.0,2.0 0 0 1 480.06,215.11" fill="none" stroke="#a038a2" stroke-width="1.05"/>
<path d="M487.41,218.03 A2.0,2.0 0 0 1 491.41,218.03" fill="none" stroke="#a038a2" stroke-width="1.05"/>
<path d="M502.97,225.25 A2.0,2.0 0 0 1 506.97,225.25" fill="none" stroke="#a038a2" stroke-width="1.05"/>
<path d="M506.58,230.34 A2.0,2.0 0 0 1 510.58,230.34" fill="none" stroke="#a038a2" stroke-width="1.05"/>
<path d="M520.92,234.44 A2.0,2.0 0 0 1 524.92,234.44" fill="none" stroke="#a038a2" stroke-width="1.05"/>
<path d="M529.94,241.74 A2.0,2.0 0 0 1 533.94,241.74" fill="none" stroke="#a038a2" stroke-width="1.05"/>
<path d="M547.08,245.82 A2.0,2.0 0 0 1 551.08,245.82" fill="none" stroke="#a038a2" stroke-width="1.05"/>
<path d="M557.00,253.56 A2.0,2.0 0 0 1 561.00,253.56" fill="none" stroke="#a038a2" stroke-width="1.05"/>
<path d="M568.87,255.80 A2.0,2.0 0 0 1 572.87,255.80" fill="none" stroke="#a038a2" stroke-width="1.05"/>
<path d="M581.52,262.68 A2.0,2.0 0 0 1 585.52,262.68" fill="none" stroke="#a038a2" stroke-width="1.05"/>
<path d="M586.63,268.16 A2.0,2.0 0 0 1 590.63,268.16" fill="none" stroke="#a038a2" stroke-width="1.05"/>
<path d="M603.77,274.25 A2.0,2.0 0 0 1 607.77,274.25" fill="none" stroke="#a038a2" stroke-width="1.05"/>
<path d="M615.06,276.94 A2.0,2.0 0 0 1 619.06,276.94" fill="none" stroke="#a038a2" stroke-width="1.05"/>
<circle cx="628.43" cy="284.10" r="1.8" fill="none" stroke="#a84aa8" stroke-width="0.8" />
<circle cx="337.58" cy="141.10" r="1.8" fill="none" stroke="#a84aa8" stroke-width="0.8" />
<path d="M349.76,146.35 A2.0,2.0 0 0 1 353.76,146.35" fill="none" stroke="#a038a2" stroke-width="1.05"/>
<path d="M358.66,150.18 A2.0,2.0 0 0 1 362.66,150.18" fill="none" stroke="#a038a2" stroke-width="1.05"/>
<path d="M370.23,155.47 A2.0,2.0 0 0 1 374.23,155.47" fill="none" stroke="#a038a2" stroke-width="1.05"/>
<path d="M380.86,162.91 A2.0,2.0 0 0 1 384.86,162.91" fill="none" stroke="#a038a2" stroke-width="1.05"/>
<path d="M396.56,167.26 A2.0,2.0 0 0 1 400.56,167.26" fill="none" stroke="#a038a2" stroke-width="1.05"/>
<path d="M401.83,173.57 A2.0,2.0 0 0 1 405.83,173.57" fill="none" stroke="#a038a2" stroke-width="1.05"/>
<path d="M415.54,179.34 A2.0,2.0 0 0 1 419.54,179.34" fill="none" stroke="#a038a2" stroke-width="1.05"/>
<path d="M424.39,183.78 A2.0,2.0 0 0 1 428.39,183.78" fill="none" stroke="#a038a2" stroke-width="1.05"/>
<path d="M435.93,188.89 A2.0,2.0 0 0 1 439.93,188.89" fill="none" stroke="#a038a2" stroke-width="1.05"/>
<path d="M449.63,194.68 A2.0,2.0 0 0 1 453.63,194.68" fill="none" stroke="#a038a2" stroke-width="1.05"/>
<path d="M463.64,201.20 A2.0,2.0 0 0 1 467.64,201.20" fill="none" stroke="#a038a2" stroke-width="1.05"/>
<path d="M473.16,206.12 A2.0,2.0 0 0 1 477.16,206.12" fill="none" stroke="#a038a2" stroke-width="1.05"/>
<path d="M482.98,211.41 A2.0,2.0 0 0 1 486.98,211.41" fill="none" stroke="#a038a2" stroke-width="1.05"/>
<path d="M494.05,216.52 A2.0,2.0 0 0 1 498.05,216.52" fill="none" stroke="#a038a2" stroke-width="1.05"/>
<path d="M511.56,221.96 A2.0,2.0 0 0 1 515.56,221.96" fill="none" stroke="#a038a2" stroke-width="1.05"/>
<path d="M519.71,226.08 A2.0,2.0 0 0 1 523.71,226.08" fill="none" stroke="#a038a2" stroke-width="1.05"/>
<path d="M533.26,234.10 A2.0,2.0 0 0 1 537.26,234.10" fill="none" stroke="#a038a2" stroke-width="1.05"/>
<path d="M546.20,238.46 A2.0,2.0 0 0 1 550.20,238.46" fill="none" stroke="#a038a2" stroke-width="1.05"/>
<path d="M558.44,242.13 A2.0,2.0 0 0 1 562.44,242.13" fill="none" stroke="#a038a2" stroke-width="1.05"/>
<path d="M567.54,247.91 A2.0,2.0 0 0 1 571.54,247.91" fill="none" stroke="#a038a2" stroke-width="1.05"/>
<path d="M583.64,253.00 A2.0,2.0 0 0 1 587.64,253.00" fill="none" stroke="#a038a2" stroke-width="1.05"/>
<path d="M592.46,257.78 A2.0,2.0 0 0 1 596.46,257.78" fill="none" stroke="#a038a2" stroke-width="1.05"/>
<path d="M604.92,264.47 A2.0,2.0 0 0 1 608.92,264.47" fill="none" stroke="#a038a2" stroke-width="1.05"/>
<path d="M613.15,269.65 A2.0,2.0 0 0 1 617.15,269.65" fill="none" stroke="#a038a2" stroke-width="1.05"/>
<path d="M621.53,274.57 A2.0,2.0 0 0 1 625.53,274.57" fill="none" stroke="#a038a2" stroke-width="1.05"/>
<circle cx="639.84" cy="280.06" r="1.8" fill="none" stroke="#a84aa8" stroke-width="0.8" />
<circle cx="348.99" cy="137.07" r="1.8" fill="none" stroke="#a84aa8" stroke-width="0.8" />
<path d="M357.68,141.01 A2.0,2.0 0 0 1 361.68,141.01" fill="none" stroke="#a038a2" stroke-width="1.05"/>
<path d="M366.87,148.05 A2.0,2.0 0 0 1 370.87,148.05" fill="none" stroke="#a038a2" stroke-width="1.05"/>
<path d="M381.61,151.52 A2.0,2.0 0 0 1 385.61,151.52" fill="none" stroke="#a038a2" stroke-width="1.05"/>
<path d="M396.57,159.23 A2.0,2.0 0 0 1 400.57,159.23" fill="none" stroke="#a038a2" stroke-width="1.05"/>
<path d="M402.37,163.98 A2.0,2.0 0 0 1 406.37,163.98" fill="none" stroke="#a038a2" stroke-width="1.05"/>
<path d="M415.36,168.89 A2.0,2.0 0 0 1 419.36,168.89" fill="none" stroke="#a038a2" stroke-width="1.05"/>
<path d="M426.15,173.92 A2.0,2.0 0 0 1 430.15,173.92" fill="none" stroke="#a038a2" stroke-width="1.05"/>
<path d="M441.45,178.44 A2.0,2.0 0 0 1 445.45,178.44" fill="none" stroke="#a038a2" stroke-width="1.05"/>
<path d="M454.52,186.47 A2.0,2.0 0 0 1 458.52,186.47" fill="none" stroke="#a038a2" stroke-width="1.05"/>
<path d="M464.62,189.08 A2.0,2.0 0 0 1 468.62,189.08" fill="none" stroke="#a038a2" stroke-width="1.05"/>
<path d="M472.96,195.88 A2.0,2.0 0 0 1 476.96,195.88" fill="none" stroke="#a038a2" stroke-width="1.05"/>
<path d="M483.02,200.38 A2.0,2.0 0 0 1 487.02,200.38" fill="none" stroke="#a038a2" stroke-width="1.05"/>
<path d="M498.00,206.68 A2.0,2.0 0 0 1 502.00,206.68" fill="none" stroke="#a038a2" stroke-width="1.05"/>
<path d="M508.12,211.32 A2.0,2.0 0 0 1 512.12,211.32" fill="none" stroke="#a038a2" stroke-width="1.05"/>
<path d="M517.22,216.67 A2.0,2.0 0 0 1 521.22,216.67" fill="none" stroke="#a038a2" stroke-width="1.05"/>
<path d="M530.12,221.95 A2.0,2.0 0 0 1 534.12,221.95" fill="none" stroke="#a038a2" stroke-width="1.05"/>
<path d="M539.22,227.97 A2.0,2.0 0 0 1 543.22,227.97" fill="none" stroke="#a038a2" stroke-width="1.05"/>
<path d="M553.56,233.54 A2.0,2.0 0 0 1 557.56,233.54" fill="none" stroke="#a038a2" stroke-width="1.05"/>
<path d="M568.52,238.97 A2.0,2.0 0 0 1 572.52,238.97" fill="none" stroke="#a038a2" stroke-width="1.05"/>
<path d="M581.83,244.46 A2.0,2.0 0 0 1 585.83,244.46" fill="none" stroke="#a038a2" stroke-width="1.05"/>
<path d="M594.59,249.25 A2.0,2.0 0 0 1 598.59,249.25" fill="none" stroke="#a038a2" stroke-width="1.05"/>
<path d="M601.10,254.94 A2.0,2.0 0 0 1 605.10,254.94" fill="none" stroke="#a038a2" stroke-width="1.05"/>
<path d="M614.96,262.17 A2.0,2.0 0 0 1 618.96,262.17" fill="none" stroke="#a038a2" stroke-width="1.05"/>
<path d="M628.10,265.81 A2.0,2.0 0 0 1 632.10,265.81" fill="none" stroke="#a038a2" stroke-width="1.05"/>
<path d="M637.10,269.01 A2.0,2.0 0 0 1 641.10,269.01" fill="none" stroke="#a038a2" stroke-width="1.05"/>
<circle cx="651.25" cy="276.03" r="1.8" fill="none" stroke="#a84aa8" stroke-width="0.8" />
<circle cx="360.40" cy="133.03" r="1.8" fill="none" stroke="#a84aa8" stroke-width="0.8" />
<path d="M372.96,139.30 A2.0,2.0 0 0 1 376.96,139.30" fill="none" stroke="#a038a2" stroke-width="1.05"/>
<path d="M384.82,143.85 A2.0,2.0 0 0 1 388.82,143.85" fill="none" stroke="#a038a2" stroke-width="1.05"/>
<path d="M391.42,148.29 A2.0,2.0 0 0 1 395.42,148.29" fill="none" stroke="#a038a2" stroke-width="1.05"/>
<path d="M406.93,153.91 A2.0,2.0 0 0 1 410.93,153.91" fill="none" stroke="#a038a2" stroke-width="1.05"/>
<path d="M420.17,160.04 A2.0,2.0 0 0 1 424.17,160.04" fill="none" stroke="#a038a2" stroke-width="1.05"/>
<path d="M430.97,164.68 A2.0,2.0 0 0 1 434.97,164.68" fill="none" stroke="#a038a2" stroke-width="1.05"/>
<path d="M441.95,170.70 A2.0,2.0 0 0 1 445.95,170.70" fill="none" stroke="#a038a2" stroke-width="1.05"/>
<path d="M447.10,176.29 A2.0,2.0 0 0 1 451.10,176.29" fill="none" stroke="#a038a2" stroke-width="1.05"/>
<path d="M460.16,180.69 A2.0,2.0 0 0 1 464.16,180.69" fill="none" stroke="#a038a2" stroke-width="1.05"/>
<path d="M474.48,184.96 A2.0,2.0 0 0 1 478.48,184.96" fill="none" stroke="#a038a2" stroke-width="1.05"/>
<path d="M487.37,191.90 A2.0,2.0 0 0 1 491.37,191.90" fill="none" stroke="#a038a2" stroke-width="1.05"/>
<path d="M499.69,197.30 A2.0,2.0 0 0 1 503.69,197.30" fill="none" stroke="#a038a2" stroke-width="1.05"/>
<path d="M506.50,203.73 A2.0,2.0 0 0 1 510.50,203.73" fill="none" stroke="#a038a2" stroke-width="1.05"/>
<path d="M524.29,208.29 A2.0,2.0 0 0 1 528.29,208.29" fill="none" stroke="#a038a2" stroke-width="1.05"/>
<path d="M533.01,213.33 A2.0,2.0 0 0 1 537.01,213.33" fill="none" stroke="#a038a2" stroke-width="1.05"/>
<path d="M542.69,220.07 A2.0,2.0 0 0 1 546.69,220.07" fill="none" stroke="#a038a2" stroke-width="1.05"/>
<path d="M555.86,225.22 A2.0,2.0 0 0 1 559.86,225.22" fill="none" stroke="#a038a2" stroke-width="1.05"/>
<path d="M563.90,228.85 A2.0,2.0 0 0 1 567.90,228.85" fill="none" stroke="#a038a2" stroke-width="1.05"/>
<path d="M578.79,235.99 A2.0,2.0 0 0 1 582.79,235.99" fill="none" stroke="#a038a2" stroke-width="1.05"/>
<path d="M595.08,239.73 A2.0,2.0 0 0 1 599.08,239.73" fill="none" stroke="#a038a2" stroke-width="1.05"/>
<path d="M601.80,245.70 A2.0,2.0 0 0 1 605.80,245.70" fill="none" stroke="#a038a2" stroke-width="1.05"/>
<path d="M615.14,250.37 A2.0,2.0 0 0 1 619.14,250.37" fill="none" stroke="#a038a2" stroke-width="1.05"/>
<path d="M627.96,256.59 A2.0,2.0 0 0 1 631.96,256.59" fill="none" stroke="#a038a2" stroke-width="1.05"/>
<path d="M635.67,262.76 A2.0,2.0 0 0 1 639.67,262.76" fill="none" stroke="#a038a2" stroke-width="1.05"/>
<path d="M645.61,266.47 A2.0,2.0 0 0 1 649.61,266.47" fill="none" stroke="#a038a2" stroke-width="1.05"/>
<circle cx="662.66" cy="271.99" r="1.8" fill="none" stroke="#a84aa8" stroke-width="0.8" />
<circle cx="371.81" cy="128.99" r="1.8" fill="none" stroke="#a84aa8" stroke-width="0.8" />
<path d="M381.44,134.54 A2.0,2.0 0 0 1 385.44,134.54" fill="none" stroke="#a038a2" stroke-width="1.05"/>
<path d="M393.06,139.88 A2.0,2.0 0 0 1 397.06,139.88" fill="none" stroke="#a038a2" stroke-width="1.05"/>
<path d="M404.69,145.23 A2.0,2.0 0 0 1 408.69,145.23" fill="none" stroke="#a038a2" stroke-width="1.05"/>
<path d="M416.31,150.57 A2.0,2.0 0 0 1 420.31,150.57" fill="none" stroke="#a038a2" stroke-width="1.05"/>
<path d="M427.94,155.92 A2.0,2.0 0 0 1 431.94,155.92" fill="none" stroke="#a038a2" stroke-width="1.05"/>
<path d="M439.57,161.26 A2.0,2.0 0 0 1 443.57,161.26" fill="none" stroke="#a038a2" stroke-width="1.05"/>
<path d="M451.19,166.61 A2.0,2.0 0 0 1 455.19,166.61" fill="none" stroke="#a038a2" stroke-width="1.05"/>
<path d="M462.82,171.95 A2.0,2.0 0 0 1 466.82,171.95" fill="none" stroke="#a038a2" stroke-width="1.05"/>
<path d="M474.44,177.29 A2.0,2.0 0 0 1 478.44,177.29" fill="none" stroke="#a038a2" stroke-width="1.05"/>
<path d="M486.07,182.64 A2.0,2.0 0 0 1 490.07,182.64" fill="none" stroke="#a038a2" stroke-width="1.05"/>
<path d="M497.69,187.98 A2.0,2.0 0 0 1 501.69,187.98" fill="none" stroke="#a038a2" stroke-width="1.05"/>
<path d="M509.32,193.33 A2.0,2.0 0 0 1 513.32,193.33" fill="none" stroke="#a038a2" stroke-width="1.05"/>
<path d="M520.94,198.67 A2.0,2.0 0 0 1 524.94,198.67" fill="none" stroke="#a038a2" stroke-width="1.05"/>
<path d="M532.57,204.02 A2.0,2.0 0 0 1 536.57,204.02" fill="none" stroke="#a038a2" stroke-width="1.05"/>
<path d="M544.19,209.36 A2.0,2.0 0 0 1 548.19,209.36" fill="none" stroke="#a038a2" stroke-width="1.05"/>
<path d="M555.82,214.71 A2.0,2.0 0 0 1 559.82,214.71" fill="none" stroke="#a038a2" stroke-width="1.05"/>
<path d="M567.44,220.05 A2.0,2.0 0 0 1 571.44,220.05" fill="none" stroke="#a038a2" stroke-width="1.05"/>
<path d="M579.07,225.40 A2.0,2.0 0 0 1 583.07,225.40" fill="none" stroke="#a038a2" stroke-width="1.05"/>
<path d="M590.69,230.74 A2.0,2.0 0 0 1 594.69,230.74" fill="none" stroke="#a038a2" stroke-width="1.05"/>
<path d="M602.32,236.09 A2.0,2.0 0 0 1 606.32,236.09" fill="none" stroke="#a038a2" stroke-width="1.05"/>
<path d="M613.94,241.43 A2.0,2.0 0 0 1 617.94,241.43" fill="none" stroke="#a038a2" stroke-width="1.05"/>
<path d="M625.57,246.77 A2.0,2.0 0 0 1 629.57,246.77" fill="none" stroke="#a038a2" stroke-width="1.05"/>
<path d="M637.19,252.12 A2.0,2.0 0 0 1 641.19,252.12" fill="none" stroke="#a038a2" stroke-width="1.05"/>
<path d="M648.82,257.46 A2.0,2.0 0 0 1 652.82,257.46" fill="none" stroke="#a038a2" stroke-width="1.05"/>
<path d="M660.44,262.81 A2.0,2.0 0 0 1 664.44,262.81" fill="none" stroke="#a038a2" stroke-width="1.05"/>
<circle cx="674.07" cy="267.95" r="1.8" fill="none" stroke="#a84aa8" stroke-width="0.8" />
<polyline points="246.30,173.00 548.56,311.96 674.07,267.55" fill="none" stroke="#2a1218" stroke-width="1.5" />
<polyline points="246.30,172.70 371.81,128.29" fill="none" stroke="#2e2a2c" stroke-width="0.9" />
<polyline points="246.30,171.50 371.81,127.09" fill="none" stroke="#b9b9b9" stroke-width="0.6" />
<polyline points="246.30,170.80 371.81,126.39" fill="none" stroke="#6a6a6a" stroke-width="0.4" />
<polyline points="246.30,146.70 258.89,146.87 271.49,147.52 284.08,148.67 296.68,150.30 309.27,152.43 321.86,155.04 334.46,158.14 347.05,161.73 359.65,165.81 372.24,170.38 384.83,175.43 397.43,180.98 410.02,187.01 422.62,193.54 435.21,200.55 447.80,208.05 460.40,216.04 472.99,224.52 485.59,233.49 498.18,242.94 510.77,252.89 523.37,263.32 535.96,274.25 548.56,285.66" fill="none" stroke="#6f9c5e" stroke-width="0.9" />
<polyline points="246.30,146.70 246.30,173.00" fill="none" stroke="#6f9c5e" stroke-width="0.9" />
<polyline points="271.49,147.52 271.49,184.58" fill="none" stroke="#6f9c5e" stroke-width="0.9" />
<polyline points="296.68,150.30 296.68,196.16" fill="none" stroke="#6f9c5e" stroke-width="0.9" />
<polyline points="321.86,155.04 321.86,207.74" fill="none" stroke="#6f9c5e" stroke-width="0.9" />
<polyline points="347.05,161.73 347.05,219.32" fill="none" stroke="#6f9c5e" stroke-width="0.9" />
<polyline points="372.24,170.38 372.24,230.90" fill="none" stroke="#6f9c5e" stroke-width="0.9" />
<polyline points="397.43,180.98 397.43,242.48" fill="none" stroke="#6f9c5e" stroke-width="0.9" />
<polyline points="422.62,193.54 422.62,254.06" fill="none" stroke="#6f9c5e" stroke-width="0.9" />
<polyline points="447.80,208.05 447.80,265.64" fill="none" stroke="#6f9c5e" stroke-width="0.9" />
<polyline points="472.99,224.52 472.99,277.22" fill="none" stroke="#6f9c5e" stroke-width="0.9" />
<polyline points="498.18,242.94 498.18,288.80" fill="none" stroke="#6f9c5e" stroke-width="0.9" />
<polyline points="523.37,263.32 523.37,300.38" fill="none" stroke="#6f9c5e" stroke-width="0.9" />
<polyline points="548.56,285.66 548.56,311.96" fill="none" stroke="#6f9c5e" stroke-width="0.9" />
<polyline points="246.30,146.70 271.49,184.58" fill="none" stroke="#6f9c5e" stroke-width="0.9" />
<polyline points="271.49,147.52 296.68,196.16" fill="none" stroke="#6f9c5e" stroke-width="0.9" />
<polyline points="296.68,150.30 321.86,207.74" fill="none" stroke="#6f9c5e" stroke-width="0.9" />
<polyline points="321.86,155.04 347.05,219.32" fill="none" stroke="#6f9c5e" stroke-width="0.9" />
<polyline points="347.05,161.73 372.24,230.90" fill="none" stroke="#6f9c5e" stroke-width="0.9" />
<polyline points="372.24,170.38 397.43,242.48" fill="none" stroke="#6f9c5e" stroke-width="0.9" />
<polyline points="422.62,193.54 397.43,242.48" fill="none" stroke="#6f9c5e" stroke-width="0.9" />
<polyline points="447.80,208.05 422.62,254.06" fill="none" stroke="#6f9c5e" stroke-width="0.9" />
<polyline points="472.99,224.52 447.80,265.64" fill="none" stroke="#6f9c5e" stroke-width="0.9" />
<polyline points="498.18,242.94 472.99,277.22" fill="none" stroke="#6f9c5e" stroke-width="0.9" />
<polyline points="523.37,263.32 498.18,288.80" fill="none" stroke="#6f9c5e" stroke-width="0.9" />
<polyline points="548.56,285.66 523.37,300.38" fill="none" stroke="#6f9c5e" stroke-width="0.9" />
<polyline points="331.80,116.45 344.39,116.62 356.99,117.27 369.58,118.42 382.18,120.05 394.77,122.18 407.36,124.79 419.96,127.89 432.55,131.48 445.15,135.56 457.74,140.13 470.33,145.18 482.93,150.73 495.52,156.76 508.12,163.29 520.71,170.30 533.30,177.80 545.90,185.79 558.49,194.27 571.09,203.24 583.68,212.69 596.27,222.64 608.87,233.07 621.46,244.00 634.06,255.41" fill="none" stroke="#6f9c5e" stroke-width="0.9" />
<polyline points="331.80,116.45 331.80,142.75" fill="none" stroke="#6f9c5e" stroke-width="0.9" />
<polyline points="356.99,117.27 356.99,154.33" fill="none" stroke="#6f9c5e" stroke-width="0.9" />
<polyline points="382.18,120.05 382.18,165.91" fill="none" stroke="#6f9c5e" stroke-width="0.9" />
<polyline points="407.36,124.79 407.36,177.49" fill="none" stroke="#6f9c5e" stroke-width="0.9" />
<polyline points="432.55,131.48 432.55,189.07" fill="none" stroke="#6f9c5e" stroke-width="0.9" />
<polyline points="457.74,140.13 457.74,200.65" fill="none" stroke="#6f9c5e" stroke-width="0.9" />
<polyline points="482.93,150.73 482.93,212.23" fill="none" stroke="#6f9c5e" stroke-width="0.9" />
<polyline points="508.12,163.29 508.12,223.81" fill="none" stroke="#6f9c5e" stroke-width="0.9" />
<polyline points="533.30,177.80 533.30,235.39" fill="none" stroke="#6f9c5e" stroke-width="0.9" />
<polyline points="558.49,194.27 558.49,246.97" fill="none" stroke="#6f9c5e" stroke-width="0.9" />
<polyline points="583.68,212.69 583.68,258.55" fill="none" stroke="#6f9c5e" stroke-width="0.9" />
<polyline points="608.87,233.07 608.87,270.13" fill="none" stroke="#6f9c5e" stroke-width="0.9" />
<polyline points="634.06,255.41 634.06,281.71" fill="none" stroke="#6f9c5e" stroke-width="0.9" />
<polyline points="331.80,116.45 356.99,154.33" fill="none" stroke="#6f9c5e" stroke-width="0.9" />
<polyline points="356.99,117.27 382.18,165.91" fill="none" stroke="#6f9c5e" stroke-width="0.9" />
<polyline points="382.18,120.05 407.36,177.49" fill="none" stroke="#6f9c5e" stroke-width="0.9" />
<polyline points="407.36,124.79 432.55,189.07" fill="none" stroke="#6f9c5e" stroke-width="0.9" />
<polyline points="432.55,131.48 457.74,200.65" fill="none" stroke="#6f9c5e" stroke-width="0.9" />
<polyline points="457.74,140.13 482.93,212.23" fill="none" stroke="#6f9c5e" stroke-width="0.9" />
<polyline points="508.12,163.29 482.93,212.23" fill="none" stroke="#6f9c5e" stroke-width="0.9" />
<polyline points="533.30,177.80 508.12,223.81" fill="none" stroke="#6f9c5e" stroke-width="0.9" />
<polyline points="558.49,194.27 533.30,235.39" fill="none" stroke="#6f9c5e" stroke-width="0.9" />
<polyline points="583.68,212.69 558.49,246.97" fill="none" stroke="#6f9c5e" stroke-width="0.9" />
<polyline points="608.87,233.07 583.68,258.55" fill="none" stroke="#6f9c5e" stroke-width="0.9" />
<polyline points="634.06,255.41 608.87,270.13" fill="none" stroke="#6f9c5e" stroke-width="0.9" />
<polyline points="246.30,146.70 371.30,102.97" fill="none" stroke="#6f9c5e" stroke-width="0.9" />
<polyline points="271.49,147.52 396.49,103.80" fill="none" stroke="#6f9c5e" stroke-width="0.9" />
<polyline points="296.68,150.30 421.68,106.58" fill="none" stroke="#6f9c5e" stroke-width="0.9" />
<polyline points="321.86,155.04 446.87,111.31" fill="none" stroke="#6f9c5e" stroke-width="0.9" />
<polyline points="347.05,161.73 472.05,118.01" fill="none" stroke="#6f9c5e" stroke-width="0.9" />
<polyline points="372.24,170.38 497.24,126.65" fill="none" stroke="#6f9c5e" stroke-width="0.9" />
<polyline points="397.43,180.98 522.43,137.25" fill="none" stroke="#6f9c5e" stroke-width="0.9" />
<polyline points="422.62,193.54 547.62,149.81" fill="none" stroke="#6f9c5e" stroke-width="0.9" />
<polyline points="447.80,208.05 572.80,164.33" fill="none" stroke="#6f9c5e" stroke-width="0.9" />
<polyline points="472.99,224.52 597.99,180.79" fill="none" stroke="#6f9c5e" stroke-width="0.9" />
<polyline points="498.18,242.94 623.18,199.22" fill="none" stroke="#6f9c5e" stroke-width="0.9" />
<polyline points="523.37,263.32 648.37,219.60" fill="none" stroke="#6f9c5e" stroke-width="0.9" />
<polyline points="548.56,285.66 673.56,241.93" fill="none" stroke="#6f9c5e" stroke-width="0.9" />
<g clip-path="url(#slabclip)">
<polyline points="246.30,146.70 258.89,146.87 271.49,147.52 284.08,148.67 296.68,150.30 309.27,152.43 321.86,155.04 334.46,158.14 347.05,161.73 359.65,165.81 372.24,170.38 384.83,175.43 397.43,180.98 410.02,187.01 422.62,193.54 435.21,200.55 447.80,208.05 460.40,216.04 472.99,224.52 485.59,233.49 498.18,242.94 510.77,252.89 523.37,263.32 535.96,274.25 548.56,285.66" fill="none" stroke="#34521f" stroke-width="1.0" />
<polyline points="246.30,146.70 246.30,173.00" fill="none" stroke="#34521f" stroke-width="1.0" />
<polyline points="271.49,147.52 271.49,184.58" fill="none" stroke="#34521f" stroke-width="1.0" />
<polyline points="296.68,150.30 296.68,196.16" fill="none" stroke="#34521f" stroke-width="1.0" />
<polyline points="321.86,155.04 321.86,207.74" fill="none" stroke="#34521f" stroke-width="1.0" />
<polyline points="347.05,161.73 347.05,219.32" fill="none" stroke="#34521f" stroke-width="1.0" />
<polyline points="372.24,170.38 372.24,230.90" fill="none" stroke="#34521f" stroke-width="1.0" />
<polyline points="397.43,180.98 397.43,242.48" fill="none" stroke="#34521f" stroke-width="1.0" />
<polyline points="422.62,193.54 422.62,254.06" fill="none" stroke="#34521f" stroke-width="1.0" />
<polyline points="447.80,208.05 447.80,265.64" fill="none" stroke="#34521f" stroke-width="1.0" />
<polyline points="472.99,224.52 472.99,277.22" fill="none" stroke="#34521f" stroke-width="1.0" />
<polyline points="498.18,242.94 498.18,288.80" fill="none" stroke="#34521f" stroke-width="1.0" />
<polyline points="523.37,263.32 523.37,300.38" fill="none" stroke="#34521f" stroke-width="1.0" />
<polyline points="548.56,285.66 548.56,311.96" fill="none" stroke="#34521f" stroke-width="1.0" />
<polyline points="246.30,146.70 271.49,184.58" fill="none" stroke="#34521f" stroke-width="1.0" />
<polyline points="271.49,147.52 296.68,196.16" fill="none" stroke="#34521f" stroke-width="1.0" />
<polyline points="296.68,150.30 321.86,207.74" fill="none" stroke="#34521f" stroke-width="1.0" />
<polyline points="321.86,155.04 347.05,219.32" fill="none" stroke="#34521f" stroke-width="1.0" />
<polyline points="347.05,161.73 372.24,230.90" fill="none" stroke="#34521f" stroke-width="1.0" />
<polyline points="372.24,170.38 397.43,242.48" fill="none" stroke="#34521f" stroke-width="1.0" />
<polyline points="422.62,193.54 397.43,242.48" fill="none" stroke="#34521f" stroke-width="1.0" />
<polyline points="447.80,208.05 422.62,254.06" fill="none" stroke="#34521f" stroke-width="1.0" />
<polyline points="472.99,224.52 447.80,265.64" fill="none" stroke="#34521f" stroke-width="1.0" />
<polyline points="498.18,242.94 472.99,277.22" fill="none" stroke="#34521f" stroke-width="1.0" />
<polyline points="523.37,263.32 498.18,288.80" fill="none" stroke="#34521f" stroke-width="1.0" />
<polyline points="548.56,285.66 523.37,300.38" fill="none" stroke="#34521f" stroke-width="1.0" />
<polyline points="331.80,116.45 344.39,116.62 356.99,117.27 369.58,118.42 382.18,120.05 394.77,122.18 407.36,124.79 419.96,127.89 432.55,131.48 445.15,135.56 457.74,140.13 470.33,145.18 482.93,150.73 495.52,156.76 508.12,163.29 520.71,170.30 533.30,177.80 545.90,185.79 558.49,194.27 571.09,203.24 583.68,212.69 596.27,222.64 608.87,233.07 621.46,244.00 634.06,255.41" fill="none" stroke="#34521f" stroke-width="1.0" />
<polyline points="331.80,116.45 331.80,142.75" fill="none" stroke="#34521f" stroke-width="1.0" />
<polyline points="356.99,117.27 356.99,154.33" fill="none" stroke="#34521f" stroke-width="1.0" />
<polyline points="382.18,120.05 382.18,165.91" fill="none" stroke="#34521f" stroke-width="1.0" />
<polyline points="407.36,124.79 407.36,177.49" fill="none" stroke="#34521f" stroke-width="1.0" />
<polyline points="432.55,131.48 432.55,189.07" fill="none" stroke="#34521f" stroke-width="1.0" />
<polyline points="457.74,140.13 457.74,200.65" fill="none" stroke="#34521f" stroke-width="1.0" />
<polyline points="482.93,150.73 482.93,212.23" fill="none" stroke="#34521f" stroke-width="1.0" />
<polyline points="508.12,163.29 508.12,223.81" fill="none" stroke="#34521f" stroke-width="1.0" />
<polyline points="533.30,177.80 533.30,235.39" fill="none" stroke="#34521f" stroke-width="1.0" />
<polyline points="558.49,194.27 558.49,246.97" fill="none" stroke="#34521f" stroke-width="1.0" />
<polyline points="583.68,212.69 583.68,258.55" fill="none" stroke="#34521f" stroke-width="1.0" />
<polyline points="608.87,233.07 608.87,270.13" fill="none" stroke="#34521f" stroke-width="1.0" />
<polyline points="634.06,255.41 634.06,281.71" fill="none" stroke="#34521f" stroke-width="1.0" />
<polyline points="331.80,116.45 356.99,154.33" fill="none" stroke="#34521f" stroke-width="1.0" />
<polyline points="356.99,117.27 382.18,165.91" fill="none" stroke="#34521f" stroke-width="1.0" />
<polyline points="382.18,120.05 407.36,177.49" fill="none" stroke="#34521f" stroke-width="1.0" />
<polyline points="407.36,124.79 432.55,189.07" fill="none" stroke="#34521f" stroke-width="1.0" />
<polyline points="432.55,131.48 457.74,200.65" fill="none" stroke="#34521f" stroke-width="1.0" />
<polyline points="457.74,140.13 482.93,212.23" fill="none" stroke="#34521f" stroke-width="1.0" />
<polyline points="508.12,163.29 482.93,212.23" fill="none" stroke="#34521f" stroke-width="1.0" />
<polyline points="533.30,177.80 508.12,223.81" fill="none" stroke="#34521f" stroke-width="1.0" />
<polyline points="558.49,194.27 533.30,235.39" fill="none" stroke="#34521f" stroke-width="1.0" />
<polyline points="583.68,212.69 558.49,246.97" fill="none" stroke="#34521f" stroke-width="1.0" />
<polyline points="608.87,233.07 583.68,258.55" fill="none" stroke="#34521f" stroke-width="1.0" />
<polyline points="634.06,255.41 608.87,270.13" fill="none" stroke="#34521f" stroke-width="1.0" />
<polyline points="246.30,146.70 371.30,102.97" fill="none" stroke="#34521f" stroke-width="1.0" />
<polyline points="271.49,147.52 396.49,103.80" fill="none" stroke="#34521f" stroke-width="1.0" />
<polyline points="296.68,150.30 421.68,106.58" fill="none" stroke="#34521f" stroke-width="1.0" />
<polyline points="321.86,155.04 446.87,111.31" fill="none" stroke="#34521f" stroke-width="1.0" />
<polyline points="347.05,161.73 472.05,118.01" fill="none" stroke="#34521f" stroke-width="1.0" />
<polyline points="372.24,170.38 497.24,126.65" fill="none" stroke="#34521f" stroke-width="1.0" />
<polyline points="397.43,180.98 522.43,137.25" fill="none" stroke="#34521f" stroke-width="1.0" />
<polyline points="422.62,193.54 547.62,149.81" fill="none" stroke="#34521f" stroke-width="1.0" />
<polyline points="447.80,208.05 572.80,164.33" fill="none" stroke="#34521f" stroke-width="1.0" />
<polyline points="472.99,224.52 597.99,180.79" fill="none" stroke="#34521f" stroke-width="1.0" />
<polyline points="498.18,242.94 623.18,199.22" fill="none" stroke="#34521f" stroke-width="1.0" />
<polyline points="523.37,263.32 648.37,219.60" fill="none" stroke="#34521f" stroke-width="1.0" />
<polyline points="548.56,285.66 673.56,241.93" fill="none" stroke="#34521f" stroke-width="1.0" />
</g>
<circle cx="246.30" cy="146.70" r="2.0" fill="none" stroke="#b565b5" stroke-width="0.75" />
<circle cx="246.30" cy="146.70" r="1.0" fill="#2c3a24" />
<circle cx="258.89" cy="146.87" r="2.1" fill="#ffffff" stroke="#b565b5" stroke-width="0.75" fill-opacity="0.7"/>
<circle cx="271.49" cy="147.52" r="2.0" fill="none" stroke="#b565b5" stroke-width="0.75" />
<circle cx="271.49" cy="147.52" r="1.0" fill="#2c3a24" />
<circle cx="284.08" cy="148.67" r="2.1" fill="#ffffff" stroke="#b565b5" stroke-width="0.75" fill-opacity="0.7"/>
<circle cx="296.68" cy="150.30" r="2.0" fill="none" stroke="#b565b5" stroke-width="0.75" />
<circle cx="296.68" cy="150.30" r="1.0" fill="#2c3a24" />
<circle cx="309.27" cy="152.43" r="2.1" fill="none" stroke="#b04ab4" stroke-width="0.95" />
<circle cx="321.86" cy="155.04" r="2.0" fill="none" stroke="#b565b5" stroke-width="0.75" />
<circle cx="321.86" cy="155.04" r="1.0" fill="#2c3a24" />
<circle cx="334.46" cy="158.14" r="2.1" fill="none" stroke="#b04ab4" stroke-width="0.95" />
<circle cx="347.05" cy="161.73" r="2.0" fill="none" stroke="#b565b5" stroke-width="0.75" />
<circle cx="347.05" cy="161.73" r="1.0" fill="#2c3a24" />
<circle cx="359.65" cy="165.81" r="2.1" fill="none" stroke="#b04ab4" stroke-width="0.95" />
<circle cx="372.24" cy="170.38" r="2.0" fill="none" stroke="#b565b5" stroke-width="0.75" />
<circle cx="372.24" cy="170.38" r="1.0" fill="#2c3a24" />
<circle cx="384.83" cy="175.43" r="2.1" fill="none" stroke="#b04ab4" stroke-width="0.95" />
<circle cx="397.43" cy="180.98" r="2.0" fill="none" stroke="#b565b5" stroke-width="0.75" />
<circle cx="397.43" cy="180.98" r="1.0" fill="#2c3a24" />
<circle cx="410.02" cy="187.01" r="2.1" fill="none" stroke="#b04ab4" stroke-width="0.95" />
<circle cx="422.62" cy="193.54" r="2.0" fill="none" stroke="#b565b5" stroke-width="0.75" />
<circle cx="422.62" cy="193.54" r="1.0" fill="#2c3a24" />
<circle cx="435.21" cy="200.55" r="2.1" fill="none" stroke="#b04ab4" stroke-width="0.95" />
<circle cx="447.80" cy="208.05" r="2.0" fill="none" stroke="#b565b5" stroke-width="0.75" />
<circle cx="447.80" cy="208.05" r="1.0" fill="#2c3a24" />
<circle cx="460.40" cy="216.04" r="2.1" fill="none" stroke="#b04ab4" stroke-width="0.95" />
<circle cx="472.99" cy="224.52" r="2.0" fill="none" stroke="#b565b5" stroke-width="0.75" />
<circle cx="472.99" cy="224.52" r="1.0" fill="#2c3a24" />
<circle cx="485.59" cy="233.49" r="2.1" fill="none" stroke="#b04ab4" stroke-width="0.95" />
<circle cx="498.18" cy="242.94" r="2.0" fill="none" stroke="#b565b5" stroke-width="0.75" />
<circle cx="498.18" cy="242.94" r="1.0" fill="#2c3a24" />
<circle cx="510.77" cy="252.89" r="2.1" fill="none" stroke="#b04ab4" stroke-width="0.95" />
<circle cx="523.37" cy="263.32" r="2.0" fill="none" stroke="#b565b5" stroke-width="0.75" />
<circle cx="523.37" cy="263.32" r="1.0" fill="#2c3a24" />
<circle cx="535.96" cy="274.25" r="2.1" fill="none" stroke="#b04ab4" stroke-width="0.95" />
<circle cx="548.56" cy="285.66" r="2.0" fill="none" stroke="#b565b5" stroke-width="0.75" />
<circle cx="548.56" cy="285.66" r="1.0" fill="#2c3a24" />
<circle cx="246.30" cy="159.85" r="2.0" fill="#ffffff" stroke="#b565b5" stroke-width="0.75" fill-opacity="0.7"/>
<circle cx="548.56" cy="298.81" r="2.0" fill="none" stroke="#b565b5" stroke-width="0.95" />
<circle cx="331.80" cy="116.45" r="2.0" fill="none" stroke="#b565b5" stroke-width="0.75" />
<circle cx="331.80" cy="116.45" r="1.0" fill="#2c3a24" />
<circle cx="344.39" cy="116.62" r="2.1" fill="#ffffff" stroke="#b565b5" stroke-width="0.75" fill-opacity="0.7"/>
<circle cx="356.99" cy="117.27" r="2.0" fill="none" stroke="#b565b5" stroke-width="0.75" />
<circle cx="356.99" cy="117.27" r="1.0" fill="#2c3a24" />
<circle cx="369.58" cy="118.42" r="2.1" fill="none" stroke="#b04ab4" stroke-width="0.95" />
<circle cx="382.18" cy="120.05" r="2.0" fill="none" stroke="#b565b5" stroke-width="0.75" />
<circle cx="382.18" cy="120.05" r="1.0" fill="#2c3a24" />
<circle cx="394.77" cy="122.18" r="2.1" fill="none" stroke="#b04ab4" stroke-width="0.95" />
<circle cx="407.36" cy="124.79" r="2.0" fill="none" stroke="#b565b5" stroke-width="0.75" />
<circle cx="407.36" cy="124.79" r="1.0" fill="#2c3a24" />
<circle cx="419.96" cy="127.89" r="2.1" fill="none" stroke="#b04ab4" stroke-width="0.95" />
<circle cx="432.55" cy="131.48" r="2.0" fill="none" stroke="#b565b5" stroke-width="0.75" />
<circle cx="432.55" cy="131.48" r="1.0" fill="#2c3a24" />
<circle cx="445.15" cy="135.56" r="2.1" fill="none" stroke="#b04ab4" stroke-width="0.95" />
<circle cx="457.74" cy="140.13" r="2.0" fill="none" stroke="#b565b5" stroke-width="0.75" />
<circle cx="457.74" cy="140.13" r="1.0" fill="#2c3a24" />
<circle cx="470.33" cy="145.18" r="2.1" fill="none" stroke="#b04ab4" stroke-width="0.95" />
<circle cx="482.93" cy="150.73" r="2.0" fill="none" stroke="#b565b5" stroke-width="0.75" />
<circle cx="482.93" cy="150.73" r="1.0" fill="#2c3a24" />
<circle cx="495.52" cy="156.76" r="2.1" fill="none" stroke="#b04ab4" stroke-width="0.95" />
<circle cx="508.12" cy="163.29" r="2.0" fill="none" stroke="#b565b5" stroke-width="0.75" />
<circle cx="508.12" cy="163.29" r="1.0" fill="#2c3a24" />
<circle cx="520.71" cy="170.30" r="2.1" fill="none" stroke="#b04ab4" stroke-width="0.95" />
<circle cx="533.30" cy="177.80" r="2.0" fill="none" stroke="#b565b5" stroke-width="0.75" />
<circle cx="533.30" cy="177.80" r="1.0" fill="#2c3a24" />
<circle cx="545.90" cy="185.79" r="2.1" fill="none" stroke="#b04ab4" stroke-width="0.95" />
<circle cx="558.49" cy="194.27" r="2.0" fill="none" stroke="#b565b5" stroke-width="0.75" />
<circle cx="558.49" cy="194.27" r="1.0" fill="#2c3a24" />
<circle cx="571.09" cy="203.24" r="2.1" fill="none" stroke="#b04ab4" stroke-width="0.95" />
<circle cx="583.68" cy="212.69" r="2.0" fill="none" stroke="#b565b5" stroke-width="0.75" />
<circle cx="583.68" cy="212.69" r="1.0" fill="#2c3a24" />
<circle cx="596.27" cy="222.64" r="2.1" fill="none" stroke="#b04ab4" stroke-width="0.95" />
<circle cx="608.87" cy="233.07" r="2.0" fill="none" stroke="#b565b5" stroke-width="0.75" />
<circle cx="608.87" cy="233.07" r="1.0" fill="#2c3a24" />
<circle cx="621.46" cy="244.00" r="2.1" fill="none" stroke="#b04ab4" stroke-width="0.95" />
<circle cx="634.06" cy="255.41" r="2.0" fill="none" stroke="#b565b5" stroke-width="0.75" />
<circle cx="634.06" cy="255.41" r="1.0" fill="#2c3a24" />
<circle cx="331.80" cy="129.60" r="2.0" fill="#ffffff" stroke="#b565b5" stroke-width="0.75" fill-opacity="0.7"/>
<circle cx="634.06" cy="268.56" r="2.0" fill="none" stroke="#b565b5" stroke-width="0.95" />
</g>
<path d="M196.6,15 L196.6,2.8 Q196.6,1.4 198,1.4 L276.6,1.4 Q278,1.4 278,2.8 L278,15 Z" fill="#fafbfc" stroke="#b9bcc2" stroke-width="0.8"/>
<rect x="197.00" y="14.40" width="80.60" height="1.40" fill="#fdfdfe" />
<line x1="203.00" y1="4.60" x2="206.20" y2="8.40" stroke="#c2185b" stroke-width="0.9" />
<line x1="209.60" y1="4.60" x2="206.20" y2="8.40" stroke="#c2185b" stroke-width="0.9" />
<line x1="206.20" y1="8.40" x2="206.20" y2="11.60" stroke="#c2185b" stroke-width="0.9" />
<circle cx="203.00" cy="4.60" r="0.9" fill="#e0207a" />
<circle cx="209.60" cy="4.60" r="0.9" fill="#e0207a" />
<circle cx="206.20" cy="11.80" r="0.9" fill="#e0207a" />
<text x="212.00" y="10.84" font-size="7.6" fill="#333" textLength="50.00" lengthAdjust="spacingAndGlyphs" >Structure 3D-solver</text>
<line x1="270.40" y1="6.00" x2="274.00" y2="9.80" stroke="#555" stroke-width="0.8" />
<line x1="274.00" y1="6.00" x2="270.40" y2="9.80" stroke="#555" stroke-width="0.8" />
<defs><linearGradient id="tg" x1="0" y1="0" x2="0" y2="1"><stop offset="0" stop-color="#ebebeb"/><stop offset="1" stop-color="#d9d9d9"/></linearGradient></defs>
<path d="M278.6,14.6 L278.6,3.4 Q278.6,2.2 279.8,2.2 L330.2,2.2 Q331.4,2.2 331.4,3.4 L331.4,14.6 Z" fill="url(#tg)" stroke="#b4b6ba" stroke-width="0.8"/>
<rect x="282.40" y="4.40" width="7.60" height="7.60" fill="#e9f1fb" stroke="#8aa6d6" stroke-width="0.7" />
<polygon points="283.00,9.20 289.40,9.20 289.40,11.40 283.00,11.40" fill="#4f8fd8" />
<polygon points="285.60,8.60 289.40,5.20 289.40,8.60" fill="#f0a040" />
<text x="292.30" y="11.06" font-size="7.4" fill="#333" textLength="24.50" lengthAdjust="spacingAndGlyphs" >FRM B 2D</text>
<polygon points="721.20,5.80 725.20,5.80 723.20,8.20" fill="#3a4a8a" />
<polygon points="699.80,17.60 724.20,27.60 723.90,56.40 699.30,67.60 676.90,55.40 676.70,26.20" fill="#a9a9a9" />
<polygon points="699.84,19.18 720.33,27.58 699.50,36.65 680.43,26.40" fill="#8b8b8b" />
<polygon points="678.52,29.51 697.59,39.76 697.50,64.29 678.69,54.04" fill="#8b8b8b" />
<polygon points="701.37,39.86 722.20,30.78 721.95,54.98 701.28,64.38" fill="#8b8b8b" />
<text transform="matrix(1,0.5,0,1,688.2,49.2)" font-size="7.4" fill="#b4b4b4" text-anchor="middle" textLength="12.6" lengthAdjust="spacingAndGlyphs">LEFT</text>
<text transform="matrix(1,-0.42,0,1,711.4,48.6)" font-size="7.4" fill="#c6c6c6" text-anchor="middle" textLength="19.6" lengthAdjust="spacingAndGlyphs">FRONT</text>
<text transform="matrix(0.85,-0.5,0.9,0.45,698.8,29.6)" font-size="5.2" fill="#b2b2b2" text-anchor="middle">TOP</text>
<circle cx="699.75" cy="20.10" r="2.1" fill="#a9a9a9" />
<circle cx="679.42" cy="27.66" r="2.1" fill="#a9a9a9" />
<circle cx="721.22" cy="28.90" r="2.1" fill="#a9a9a9" />
<circle cx="679.60" cy="53.36" r="2.1" fill="#a9a9a9" />
<circle cx="720.96" cy="54.24" r="2.1" fill="#a9a9a9" />
<circle cx="699.31" cy="64.10" r="2.1" fill="#a9a9a9" />
<circle cx="699.40" cy="38.40" r="2.3" fill="#a9a9a9" />
<line x1="229.40" y1="397.00" x2="217.60" y2="391.60" stroke="#12a012" stroke-width="2.0" stroke-linecap="round"/>
<circle cx="217.20" cy="391.40" r="1.3" fill="#0c7a0c" />
<line x1="229.40" y1="397.00" x2="243.20" y2="392.60" stroke="#1020c8" stroke-width="2.0" stroke-linecap="round"/>
<circle cx="243.80" cy="392.40" r="1.3" fill="#0c18a0" />
<line x1="229.40" y1="397.40" x2="229.40" y2="381.00" stroke="#8c0c0c" stroke-width="2.0" />
<polygon points="227.60,381.60 231.20,381.60 229.40,378.00" fill="#8c0c0c" />
<text x="227.40" y="375.60" font-size="8.6" fill="#ee2a2a" textLength="4.00" lengthAdjust="spacingAndGlyphs" >Z</text>
<text x="211.20" y="390.00" font-size="8.6" fill="#2ec02e" textLength="4.70" lengthAdjust="spacingAndGlyphs" >Y</text>
<text x="245.50" y="390.30" font-size="8.6" fill="#4a5af0" textLength="4.60" lengthAdjust="spacingAndGlyphs" >X</text>
<text x="196.60" y="427.92" font-size="7.0" fill="#1a1a1a" textLength="134.40" lengthAdjust="spacingAndGlyphs" font-family="&quot;DejaVu Sans&quot;,sans-serif" >Solver Model used for 1st Order Linear</text>
<polygon points="686.30,381.30 700.00,381.30 714.20,399.20 700.60,399.20" fill="#d9d9d9" />
<polygon points="686.30,381.30 700.40,399.60 700.40,409.70 686.30,391.70" fill="#e18585" />
<polygon points="673.00,391.70 686.30,391.70 700.40,409.70 687.80,409.70" fill="#f9a3a3" />
<polygon points="673.00,391.70 687.80,409.70 687.80,419.70 673.00,398.90" fill="#adadad" />
<polygon points="687.80,409.70 700.40,409.70 700.40,399.20 714.20,399.20 714.20,419.70 687.80,419.70" fill="#c6c6c6" />
<rect x="18.85" y="13.60" width="41.30" height="12.20" fill="none" stroke="#ad1b2d" stroke-width="1.5" />
<rect x="4.50" y="201.00" width="38.50" height="16.70" fill="none" stroke="#ad1b2d" stroke-width="1.5" />
<rect x="11.30" y="330.30" width="142.70" height="12.30" fill="none" stroke="#ad1b2d" stroke-width="1.7" />
<line x1="166.80" y1="339.40" x2="295.60" y2="195.80" stroke="#aa1e2e" stroke-width="2.3" />
<polygon points="299.40,191.60 298.20,199.40 291.20,193.60" fill="#aa1e2e" />
<line x1="165.80" y1="331.60" x2="165.80" y2="339.40" stroke="#333" stroke-width="0.7" />
<line x1="164.20" y1="331.40" x2="167.40" y2="331.40" stroke="#333" stroke-width="0.7" />
<line x1="164.20" y1="339.60" x2="167.40" y2="339.60" stroke="#333" stroke-width="0.7" />
</svg>
</body></html>
